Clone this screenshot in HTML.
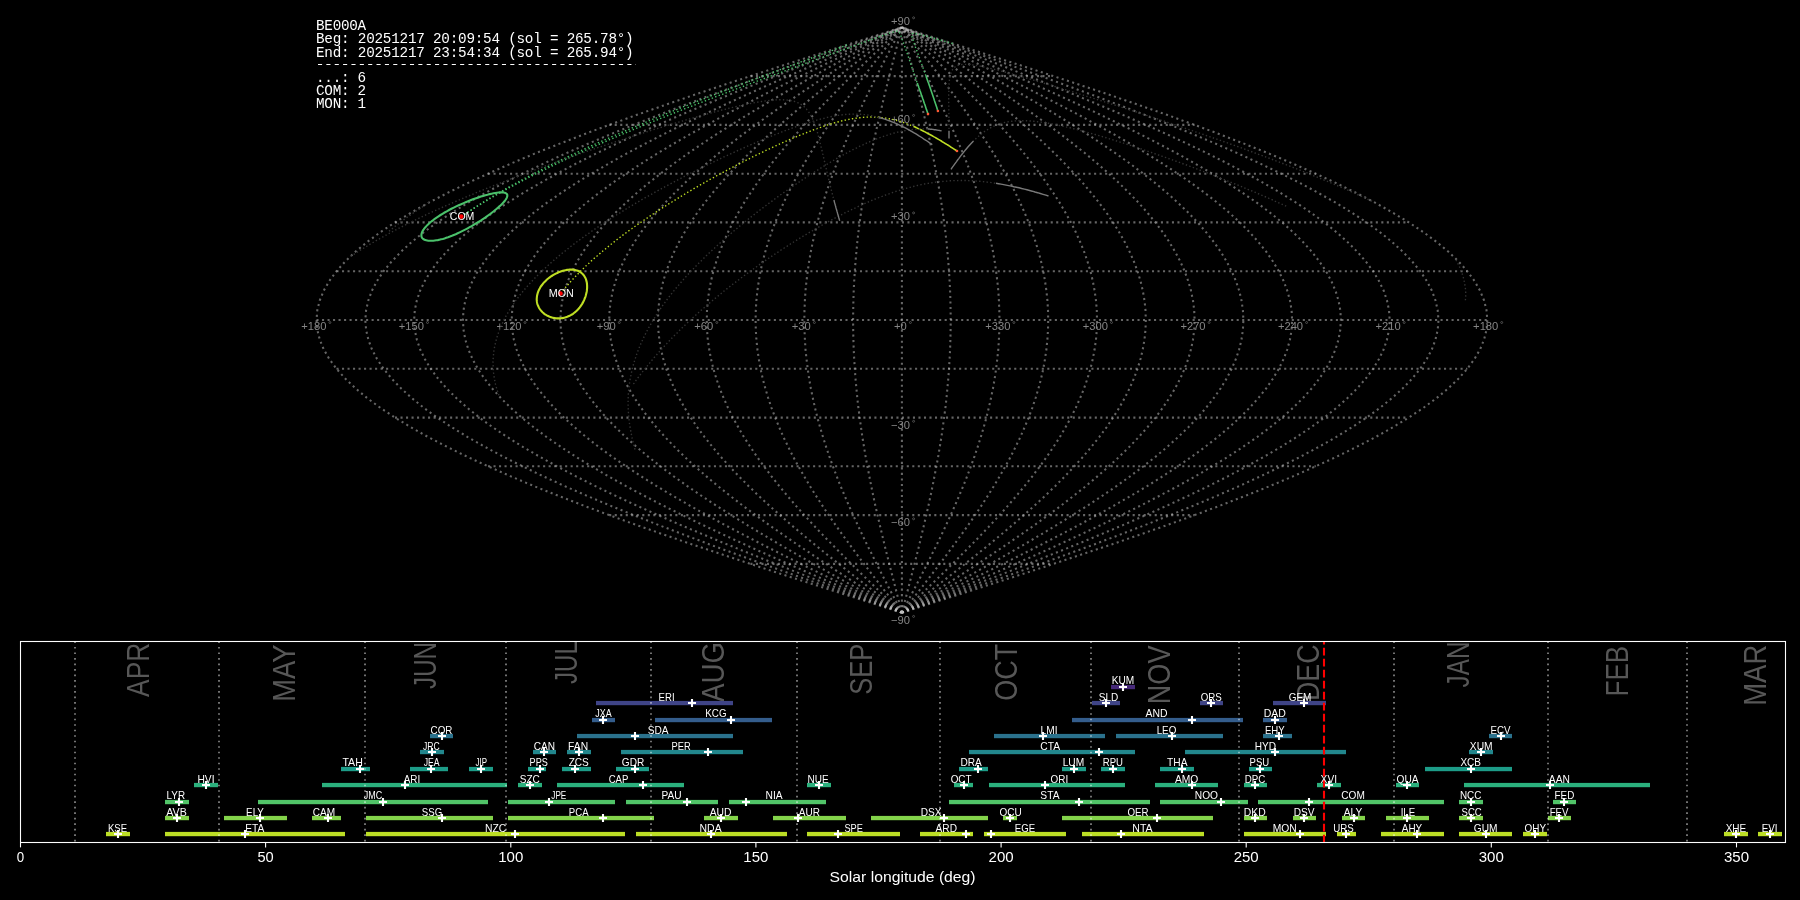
<!DOCTYPE html>
<html><head><meta charset="utf-8"><title>BE000A shower association</title>
<style>
html,body{margin:0;padding:0;background:#000;}
body{width:1800px;height:900px;overflow:hidden;font-family:"Liberation Sans",sans-serif;}
svg{display:block;}
</style></head><body>
<svg width="1800" height="900" viewBox="0 0 1800 900">
<rect width="1800" height="900" fill="#000"/>
<g opacity="0.999">
<g fill="none" stroke="#c4c4c4" stroke-opacity="0.52" stroke-width="2.08" stroke-dasharray="2.08 3.43">
<path d="M750.4 563.9 L1053.4 563.9"/>
<path d="M609.2 515.1 L1194.6 515.1"/>
<path d="M488 466.3 L1315.8 466.3"/>
<path d="M395 417.6 L1408.8 417.6"/>
<path d="M336.5 368.8 L1467.3 368.8"/>
<path d="M316.5 320 L1487.3 320"/>
<path d="M336.5 271.2 L1467.3 271.2"/>
<path d="M395 222.4 L1408.8 222.4"/>
<path d="M488 173.7 L1315.8 173.7"/>
<path d="M609.2 124.9 L1194.6 124.9"/>
<path d="M750.4 76.1 L1053.4 76.1"/>
<path d="M901.9 612.7 L932.5 602.9 L963.1 593.2 L993.5 583.4 L1023.6 573.7 L1053.4 563.9 L1082.8 554.1 L1111.7 544.4 L1140 534.6 L1167.6 524.9 L1194.6 515.1 L1220.7 505.4 L1246 495.6 L1270.3 485.9 L1293.6 476.1 L1315.8 466.3 L1336.9 456.6 L1356.8 446.8 L1375.5 437.1 L1392.8 427.3 L1408.8 417.6 L1423.5 407.8 L1436.7 398 L1448.4 388.3 L1458.6 378.5 L1467.3 368.8 L1474.5 359 L1480.1 349.3 L1484.1 339.5 L1486.5 329.8 L1487.3 320 L1486.5 310.2 L1484.1 300.5 L1480.1 290.7 L1474.5 281 L1467.3 271.2 L1458.6 261.5 L1448.4 251.7 L1436.7 242 L1423.5 232.2 L1408.8 222.4 L1392.8 212.7 L1375.5 202.9 L1356.8 193.2 L1336.9 183.4 L1315.8 173.7 L1293.6 163.9 L1270.3 154.1 L1246 144.4 L1220.7 134.6 L1194.6 124.9 L1167.6 115.1 L1140 105.4 L1111.7 95.6 L1082.8 85.9 L1053.4 76.1 L1023.6 66.3 L993.5 56.6 L963.1 46.8 L932.5 37.1 L901.9 27.3"/>
<path d="M901.9 612.7 L930 602.9 L958 593.2 L985.8 583.4 L1013.5 573.7 L1040.8 563.9 L1067.7 554.1 L1094.2 544.4 L1120.1 534.6 L1145.5 524.9 L1170.2 515.1 L1194.1 505.4 L1217.3 495.6 L1239.6 485.9 L1260.9 476.1 L1281.3 466.3 L1300.7 456.6 L1318.9 446.8 L1336 437.1 L1351.9 427.3 L1366.6 417.6 L1380 407.8 L1392.1 398 L1402.8 388.3 L1412.2 378.5 L1420.2 368.8 L1426.8 359 L1431.9 349.3 L1435.5 339.5 L1437.7 329.8 L1438.5 320 L1437.7 310.2 L1435.5 300.5 L1431.9 290.7 L1426.8 281 L1420.2 271.2 L1412.2 261.5 L1402.8 251.7 L1392.1 242 L1380 232.2 L1366.6 222.4 L1351.9 212.7 L1336 202.9 L1318.9 193.2 L1300.7 183.4 L1281.3 173.7 L1260.9 163.9 L1239.6 154.1 L1217.3 144.4 L1194.1 134.6 L1170.2 124.9 L1145.5 115.1 L1120.1 105.4 L1094.2 95.6 L1067.7 85.9 L1040.8 76.1 L1013.5 66.3 L985.8 56.6 L958 46.8 L930 37.1 L901.9 27.3"/>
<path d="M901.9 612.7 L927.4 602.9 L952.9 593.2 L978.2 583.4 L1003.3 573.7 L1028.2 563.9 L1052.6 554.1 L1076.7 544.4 L1100.3 534.6 L1123.4 524.9 L1145.8 515.1 L1167.6 505.4 L1188.6 495.6 L1208.9 485.9 L1228.3 476.1 L1246.8 466.3 L1264.4 456.6 L1281 446.8 L1296.5 437.1 L1311 427.3 L1324.3 417.6 L1336.5 407.8 L1347.5 398 L1357.3 388.3 L1365.8 378.5 L1373.1 368.8 L1379 359 L1383.7 349.3 L1387 339.5 L1389 329.8 L1389.7 320 L1389 310.2 L1387 300.5 L1383.7 290.7 L1379 281 L1373.1 271.2 L1365.8 261.5 L1357.3 251.7 L1347.5 242 L1336.5 232.2 L1324.3 222.4 L1311 212.7 L1296.5 202.9 L1281 193.2 L1264.4 183.4 L1246.8 173.7 L1228.3 163.9 L1208.9 154.1 L1188.6 144.4 L1167.6 134.6 L1145.8 124.9 L1123.4 115.1 L1100.3 105.4 L1076.7 95.6 L1052.6 85.9 L1028.2 76.1 L1003.3 66.3 L978.2 56.6 L952.9 46.8 L927.4 37.1 L901.9 27.3"/>
<path d="M901.9 612.7 L924.9 602.9 L947.8 593.2 L970.6 583.4 L993.2 573.7 L1015.5 563.9 L1037.6 554.1 L1059.2 544.4 L1080.5 534.6 L1101.2 524.9 L1121.4 515.1 L1141 505.4 L1159.9 495.6 L1178.2 485.9 L1195.7 476.1 L1212.3 466.3 L1228.2 456.6 L1243.1 446.8 L1257.1 437.1 L1270.1 427.3 L1282.1 417.6 L1293.1 407.8 L1303 398 L1311.8 388.3 L1319.4 378.5 L1326 368.8 L1331.3 359 L1335.5 349.3 L1338.5 339.5 L1340.3 329.8 L1340.9 320 L1340.3 310.2 L1338.5 300.5 L1335.5 290.7 L1331.3 281 L1326 271.2 L1319.4 261.5 L1311.8 251.7 L1303 242 L1293.1 232.2 L1282.1 222.4 L1270.1 212.7 L1257.1 202.9 L1243.1 193.2 L1228.2 183.4 L1212.3 173.7 L1195.7 163.9 L1178.2 154.1 L1159.9 144.4 L1141 134.6 L1121.4 124.9 L1101.2 115.1 L1080.5 105.4 L1059.2 95.6 L1037.6 85.9 L1015.5 76.1 L993.2 66.3 L970.6 56.6 L947.8 46.8 L924.9 37.1 L901.9 27.3"/>
<path d="M901.9 612.7 L922.3 602.9 L942.7 593.2 L962.9 583.4 L983 573.7 L1002.9 563.9 L1022.5 554.1 L1041.7 544.4 L1060.6 534.6 L1079.1 524.9 L1097 515.1 L1114.4 505.4 L1131.3 495.6 L1147.5 485.9 L1163 476.1 L1177.8 466.3 L1191.9 456.6 L1205.2 446.8 L1217.6 437.1 L1229.2 427.3 L1239.9 417.6 L1249.6 407.8 L1258.4 398 L1266.2 388.3 L1273 378.5 L1278.8 368.8 L1283.6 359 L1287.3 349.3 L1290 339.5 L1291.6 329.8 L1292.1 320 L1291.6 310.2 L1290 300.5 L1287.3 290.7 L1283.6 281 L1278.8 271.2 L1273 261.5 L1266.2 251.7 L1258.4 242 L1249.6 232.2 L1239.9 222.4 L1229.2 212.7 L1217.6 202.9 L1205.2 193.2 L1191.9 183.4 L1177.8 173.7 L1163 163.9 L1147.5 154.1 L1131.3 144.4 L1114.4 134.6 L1097 124.9 L1079.1 115.1 L1060.6 105.4 L1041.7 95.6 L1022.5 85.9 L1002.9 76.1 L983 66.3 L962.9 56.6 L942.7 46.8 L922.3 37.1 L901.9 27.3"/>
<path d="M901.9 612.7 L919.8 602.9 L937.6 593.2 L955.3 583.4 L972.9 573.7 L990.3 563.9 L1007.4 554.1 L1024.3 544.4 L1040.8 534.6 L1056.9 524.9 L1072.6 515.1 L1087.9 505.4 L1102.6 495.6 L1116.8 485.9 L1130.4 476.1 L1143.3 466.3 L1155.7 456.6 L1167.3 446.8 L1178.1 437.1 L1188.3 427.3 L1197.6 417.6 L1206.1 407.8 L1213.8 398 L1220.7 388.3 L1226.6 378.5 L1231.7 368.8 L1235.9 359 L1239.2 349.3 L1241.5 339.5 L1242.9 329.8 L1243.4 320 L1242.9 310.2 L1241.5 300.5 L1239.2 290.7 L1235.9 281 L1231.7 271.2 L1226.6 261.5 L1220.7 251.7 L1213.8 242 L1206.1 232.2 L1197.6 222.4 L1188.3 212.7 L1178.1 202.9 L1167.3 193.2 L1155.7 183.4 L1143.3 173.7 L1130.4 163.9 L1116.8 154.1 L1102.6 144.4 L1087.9 134.6 L1072.6 124.9 L1056.9 115.1 L1040.8 105.4 L1024.3 95.6 L1007.4 85.9 L990.3 76.1 L972.9 66.3 L955.3 56.6 L937.6 46.8 L919.8 37.1 L901.9 27.3"/>
<path d="M901.9 612.7 L917.2 602.9 L932.5 593.2 L947.7 583.4 L962.8 573.7 L977.7 563.9 L992.3 554.1 L1006.8 544.4 L1020.9 534.6 L1034.8 524.9 L1048.2 515.1 L1061.3 505.4 L1073.9 495.6 L1086.1 485.9 L1097.7 476.1 L1108.9 466.3 L1119.4 456.6 L1129.4 446.8 L1138.7 437.1 L1147.4 427.3 L1155.4 417.6 L1162.7 407.8 L1169.3 398 L1175.1 388.3 L1180.3 378.5 L1184.6 368.8 L1188.2 359 L1191 349.3 L1193 339.5 L1194.2 329.8 L1194.6 320 L1194.2 310.2 L1193 300.5 L1191 290.7 L1188.2 281 L1184.6 271.2 L1180.3 261.5 L1175.1 251.7 L1169.3 242 L1162.7 232.2 L1155.4 222.4 L1147.4 212.7 L1138.7 202.9 L1129.4 193.2 L1119.4 183.4 L1108.9 173.7 L1097.7 163.9 L1086.1 154.1 L1073.9 144.4 L1061.3 134.6 L1048.2 124.9 L1034.8 115.1 L1020.9 105.4 L1006.8 95.6 L992.3 85.9 L977.7 76.1 L962.8 66.3 L947.7 56.6 L932.5 46.8 L917.2 37.1 L901.9 27.3"/>
<path d="M901.9 612.7 L914.7 602.9 L927.4 593.2 L940.1 583.4 L952.6 573.7 L965 563.9 L977.3 554.1 L989.3 544.4 L1001.1 534.6 L1012.6 524.9 L1023.9 515.1 L1034.7 505.4 L1045.3 495.6 L1055.4 485.9 L1065.1 476.1 L1074.4 466.3 L1083.2 456.6 L1091.4 446.8 L1099.2 437.1 L1106.5 427.3 L1113.1 417.6 L1119.2 407.8 L1124.7 398 L1129.6 388.3 L1133.9 378.5 L1137.5 368.8 L1140.5 359 L1142.8 349.3 L1144.5 339.5 L1145.5 329.8 L1145.8 320 L1145.5 310.2 L1144.5 300.5 L1142.8 290.7 L1140.5 281 L1137.5 271.2 L1133.9 261.5 L1129.6 251.7 L1124.7 242 L1119.2 232.2 L1113.1 222.4 L1106.5 212.7 L1099.2 202.9 L1091.4 193.2 L1083.2 183.4 L1074.4 173.7 L1065.1 163.9 L1055.4 154.1 L1045.3 144.4 L1034.7 134.6 L1023.9 124.9 L1012.6 115.1 L1001.1 105.4 L989.3 95.6 L977.3 85.9 L965 76.1 L952.6 66.3 L940.1 56.6 L927.4 46.8 L914.7 37.1 L901.9 27.3"/>
<path d="M901.9 612.7 L912.1 602.9 L922.3 593.2 L932.4 583.4 L942.5 573.7 L952.4 563.9 L962.2 554.1 L971.8 544.4 L981.3 534.6 L990.5 524.9 L999.5 515.1 L1008.2 505.4 L1016.6 495.6 L1024.7 485.9 L1032.5 476.1 L1039.9 466.3 L1046.9 456.6 L1053.5 446.8 L1059.8 437.1 L1065.5 427.3 L1070.9 417.6 L1075.8 407.8 L1080.2 398 L1084.1 388.3 L1087.5 378.5 L1090.4 368.8 L1092.8 359 L1094.6 349.3 L1096 339.5 L1096.8 329.8 L1097 320 L1096.8 310.2 L1096 300.5 L1094.6 290.7 L1092.8 281 L1090.4 271.2 L1087.5 261.5 L1084.1 251.7 L1080.2 242 L1075.8 232.2 L1070.9 222.4 L1065.5 212.7 L1059.8 202.9 L1053.5 193.2 L1046.9 183.4 L1039.9 173.7 L1032.5 163.9 L1024.7 154.1 L1016.6 144.4 L1008.2 134.6 L999.5 124.9 L990.5 115.1 L981.3 105.4 L971.8 95.6 L962.2 85.9 L952.4 76.1 L942.5 66.3 L932.4 56.6 L922.3 46.8 L912.1 37.1 L901.9 27.3"/>
<path d="M901.9 612.7 L909.6 602.9 L917.2 593.2 L924.8 583.4 L932.3 573.7 L939.8 563.9 L947.1 554.1 L954.3 544.4 L961.4 534.6 L968.3 524.9 L975.1 515.1 L981.6 505.4 L987.9 495.6 L994 485.9 L999.8 476.1 L1005.4 466.3 L1010.7 456.6 L1015.6 446.8 L1020.3 437.1 L1024.6 427.3 L1028.6 417.6 L1032.3 407.8 L1035.6 398 L1038.5 388.3 L1041.1 378.5 L1043.3 368.8 L1045 359 L1046.4 349.3 L1047.4 339.5 L1048 329.8 L1048.2 320 L1048 310.2 L1047.4 300.5 L1046.4 290.7 L1045 281 L1043.3 271.2 L1041.1 261.5 L1038.5 251.7 L1035.6 242 L1032.3 232.2 L1028.6 222.4 L1024.6 212.7 L1020.3 202.9 L1015.6 193.2 L1010.7 183.4 L1005.4 173.7 L999.8 163.9 L994 154.1 L987.9 144.4 L981.6 134.6 L975.1 124.9 L968.3 115.1 L961.4 105.4 L954.3 95.6 L947.1 85.9 L939.8 76.1 L932.3 66.3 L924.8 56.6 L917.2 46.8 L909.6 37.1 L901.9 27.3"/>
<path d="M901.9 612.7 L907 602.9 L912.1 593.2 L917.2 583.4 L922.2 573.7 L927.2 563.9 L932 554.1 L936.9 544.4 L941.6 534.6 L946.2 524.9 L950.7 515.1 L955 505.4 L959.2 495.6 L963.3 485.9 L967.2 476.1 L970.9 466.3 L974.4 456.6 L977.7 446.8 L980.8 437.1 L983.7 427.3 L986.4 417.6 L988.8 407.8 L991 398 L993 388.3 L994.7 378.5 L996.1 368.8 L997.3 359 L998.3 349.3 L998.9 339.5 L999.3 329.8 L999.5 320 L999.3 310.2 L998.9 300.5 L998.3 290.7 L997.3 281 L996.1 271.2 L994.7 261.5 L993 251.7 L991 242 L988.8 232.2 L986.4 222.4 L983.7 212.7 L980.8 202.9 L977.7 193.2 L974.4 183.4 L970.9 173.7 L967.2 163.9 L963.3 154.1 L959.2 144.4 L955 134.6 L950.7 124.9 L946.2 115.1 L941.6 105.4 L936.9 95.6 L932 85.9 L927.2 76.1 L922.2 66.3 L917.2 56.6 L912.1 46.8 L907 37.1 L901.9 27.3"/>
<path d="M901.9 612.7 L904.5 602.9 L907 593.2 L909.5 583.4 L912 573.7 L914.5 563.9 L917 554.1 L919.4 544.4 L921.7 534.6 L924 524.9 L926.3 515.1 L928.5 505.4 L930.6 495.6 L932.6 485.9 L934.5 476.1 L936.4 466.3 L938.2 456.6 L939.8 446.8 L941.4 437.1 L942.8 427.3 L944.1 417.6 L945.4 407.8 L946.5 398 L947.4 388.3 L948.3 378.5 L949 368.8 L949.6 359 L950.1 349.3 L950.4 339.5 L950.6 329.8 L950.7 320 L950.6 310.2 L950.4 300.5 L950.1 290.7 L949.6 281 L949 271.2 L948.3 261.5 L947.4 251.7 L946.5 242 L945.4 232.2 L944.1 222.4 L942.8 212.7 L941.4 202.9 L939.8 193.2 L938.2 183.4 L936.4 173.7 L934.5 163.9 L932.6 154.1 L930.6 144.4 L928.5 134.6 L926.3 124.9 L924 115.1 L921.7 105.4 L919.4 95.6 L917 85.9 L914.5 76.1 L912 66.3 L909.5 56.6 L907 46.8 L904.5 37.1 L901.9 27.3"/>
<path d="M901.9 612.7 L901.9 602.9 L901.9 593.2 L901.9 583.4 L901.9 573.7 L901.9 563.9 L901.9 554.1 L901.9 544.4 L901.9 534.6 L901.9 524.9 L901.9 515.1 L901.9 505.4 L901.9 495.6 L901.9 485.9 L901.9 476.1 L901.9 466.3 L901.9 456.6 L901.9 446.8 L901.9 437.1 L901.9 427.3 L901.9 417.6 L901.9 407.8 L901.9 398 L901.9 388.3 L901.9 378.5 L901.9 368.8 L901.9 359 L901.9 349.3 L901.9 339.5 L901.9 329.8 L901.9 320 L901.9 310.2 L901.9 300.5 L901.9 290.7 L901.9 281 L901.9 271.2 L901.9 261.5 L901.9 251.7 L901.9 242 L901.9 232.2 L901.9 222.4 L901.9 212.7 L901.9 202.9 L901.9 193.2 L901.9 183.4 L901.9 173.7 L901.9 163.9 L901.9 154.1 L901.9 144.4 L901.9 134.6 L901.9 124.9 L901.9 115.1 L901.9 105.4 L901.9 95.6 L901.9 85.9 L901.9 76.1 L901.9 66.3 L901.9 56.6 L901.9 46.8 L901.9 37.1 L901.9 27.3"/>
<path d="M901.9 612.7 L899.3 602.9 L896.8 593.2 L894.3 583.4 L891.8 573.7 L889.3 563.9 L886.8 554.1 L884.4 544.4 L882.1 534.6 L879.8 524.9 L877.5 515.1 L875.3 505.4 L873.2 495.6 L871.2 485.9 L869.3 476.1 L867.4 466.3 L865.6 456.6 L864 446.8 L862.4 437.1 L861 427.3 L859.7 417.6 L858.4 407.8 L857.3 398 L856.4 388.3 L855.5 378.5 L854.8 368.8 L854.2 359 L853.7 349.3 L853.4 339.5 L853.2 329.8 L853.1 320 L853.2 310.2 L853.4 300.5 L853.7 290.7 L854.2 281 L854.8 271.2 L855.5 261.5 L856.4 251.7 L857.3 242 L858.4 232.2 L859.7 222.4 L861 212.7 L862.4 202.9 L864 193.2 L865.6 183.4 L867.4 173.7 L869.3 163.9 L871.2 154.1 L873.2 144.4 L875.3 134.6 L877.5 124.9 L879.8 115.1 L882.1 105.4 L884.4 95.6 L886.8 85.9 L889.3 76.1 L891.8 66.3 L894.3 56.6 L896.8 46.8 L899.3 37.1 L901.9 27.3"/>
<path d="M901.9 612.7 L896.8 602.9 L891.7 593.2 L886.6 583.4 L881.6 573.7 L876.6 563.9 L871.8 554.1 L866.9 544.4 L862.2 534.6 L857.6 524.9 L853.1 515.1 L848.8 505.4 L844.6 495.6 L840.5 485.9 L836.6 476.1 L832.9 466.3 L829.4 456.6 L826.1 446.8 L823 437.1 L820.1 427.3 L817.4 417.6 L815 407.8 L812.8 398 L810.8 388.3 L809.1 378.5 L807.7 368.8 L806.5 359 L805.5 349.3 L804.9 339.5 L804.5 329.8 L804.3 320 L804.5 310.2 L804.9 300.5 L805.5 290.7 L806.5 281 L807.7 271.2 L809.1 261.5 L810.8 251.7 L812.8 242 L815 232.2 L817.4 222.4 L820.1 212.7 L823 202.9 L826.1 193.2 L829.4 183.4 L832.9 173.7 L836.6 163.9 L840.5 154.1 L844.6 144.4 L848.8 134.6 L853.1 124.9 L857.6 115.1 L862.2 105.4 L866.9 95.6 L871.8 85.9 L876.6 76.1 L881.6 66.3 L886.6 56.6 L891.7 46.8 L896.8 37.1 L901.9 27.3"/>
<path d="M901.9 612.7 L894.2 602.9 L886.6 593.2 L879 583.4 L871.5 573.7 L864 563.9 L856.7 554.1 L849.5 544.4 L842.4 534.6 L835.5 524.9 L828.7 515.1 L822.2 505.4 L815.9 495.6 L809.8 485.9 L804 476.1 L798.4 466.3 L793.1 456.6 L788.2 446.8 L783.5 437.1 L779.2 427.3 L775.2 417.6 L771.5 407.8 L768.2 398 L765.3 388.3 L762.7 378.5 L760.5 368.8 L758.8 359 L757.4 349.3 L756.4 339.5 L755.8 329.8 L755.6 320 L755.8 310.2 L756.4 300.5 L757.4 290.7 L758.8 281 L760.5 271.2 L762.7 261.5 L765.3 251.7 L768.2 242 L771.5 232.2 L775.2 222.4 L779.2 212.7 L783.5 202.9 L788.2 193.2 L793.1 183.4 L798.4 173.7 L804 163.9 L809.8 154.1 L815.9 144.4 L822.2 134.6 L828.7 124.9 L835.5 115.1 L842.4 105.4 L849.5 95.6 L856.7 85.9 L864 76.1 L871.5 66.3 L879 56.6 L886.6 46.8 L894.2 37.1 L901.9 27.3"/>
<path d="M901.9 612.7 L891.7 602.9 L881.5 593.2 L871.4 583.4 L861.3 573.7 L851.4 563.9 L841.6 554.1 L832 544.4 L822.5 534.6 L813.3 524.9 L804.3 515.1 L795.6 505.4 L787.2 495.6 L779.1 485.9 L771.3 476.1 L763.9 466.3 L756.9 456.6 L750.3 446.8 L744 437.1 L738.3 427.3 L732.9 417.6 L728 407.8 L723.6 398 L719.7 388.3 L716.3 378.5 L713.4 368.8 L711 359 L709.2 349.3 L707.8 339.5 L707 329.8 L706.8 320 L707 310.2 L707.8 300.5 L709.2 290.7 L711 281 L713.4 271.2 L716.3 261.5 L719.7 251.7 L723.6 242 L728 232.2 L732.9 222.4 L738.3 212.7 L744 202.9 L750.3 193.2 L756.9 183.4 L763.9 173.7 L771.3 163.9 L779.1 154.1 L787.2 144.4 L795.6 134.6 L804.3 124.9 L813.3 115.1 L822.5 105.4 L832 95.6 L841.6 85.9 L851.4 76.1 L861.3 66.3 L871.4 56.6 L881.5 46.8 L891.7 37.1 L901.9 27.3"/>
<path d="M901.9 612.7 L889.1 602.9 L876.4 593.2 L863.7 583.4 L851.2 573.7 L838.8 563.9 L826.5 554.1 L814.5 544.4 L802.7 534.6 L791.2 524.9 L779.9 515.1 L769.1 505.4 L758.5 495.6 L748.4 485.9 L738.7 476.1 L729.4 466.3 L720.6 456.6 L712.4 446.8 L704.6 437.1 L697.3 427.3 L690.7 417.6 L684.6 407.8 L679.1 398 L674.2 388.3 L669.9 378.5 L666.3 368.8 L663.3 359 L661 349.3 L659.3 339.5 L658.3 329.8 L658 320 L658.3 310.2 L659.3 300.5 L661 290.7 L663.3 281 L666.3 271.2 L669.9 261.5 L674.2 251.7 L679.1 242 L684.6 232.2 L690.7 222.4 L697.3 212.7 L704.6 202.9 L712.4 193.2 L720.6 183.4 L729.4 173.7 L738.7 163.9 L748.4 154.1 L758.5 144.4 L769.1 134.6 L779.9 124.9 L791.2 115.1 L802.7 105.4 L814.5 95.6 L826.5 85.9 L838.8 76.1 L851.2 66.3 L863.7 56.6 L876.4 46.8 L889.1 37.1 L901.9 27.3"/>
<path d="M901.9 612.7 L886.6 602.9 L871.3 593.2 L856.1 583.4 L841 573.7 L826.1 563.9 L811.5 554.1 L797 544.4 L782.9 534.6 L769 524.9 L755.6 515.1 L742.5 505.4 L729.9 495.6 L717.7 485.9 L706.1 476.1 L694.9 466.3 L684.4 456.6 L674.4 446.8 L665.1 437.1 L656.4 427.3 L648.4 417.6 L641.1 407.8 L634.5 398 L628.7 388.3 L623.5 378.5 L619.2 368.8 L615.6 359 L612.8 349.3 L610.8 339.5 L609.6 329.8 L609.2 320 L609.6 310.2 L610.8 300.5 L612.8 290.7 L615.6 281 L619.2 271.2 L623.5 261.5 L628.7 251.7 L634.5 242 L641.1 232.2 L648.4 222.4 L656.4 212.7 L665.1 202.9 L674.4 193.2 L684.4 183.4 L694.9 173.7 L706.1 163.9 L717.7 154.1 L729.9 144.4 L742.5 134.6 L755.6 124.9 L769 115.1 L782.9 105.4 L797 95.6 L811.5 85.9 L826.1 76.1 L841 66.3 L856.1 56.6 L871.3 46.8 L886.6 37.1 L901.9 27.3"/>
<path d="M901.9 612.7 L884 602.9 L866.2 593.2 L848.5 583.4 L830.9 573.7 L813.5 563.9 L796.4 554.1 L779.5 544.4 L763 534.6 L746.9 524.9 L731.2 515.1 L715.9 505.4 L701.2 495.6 L687 485.9 L673.4 476.1 L660.5 466.3 L648.1 456.6 L636.5 446.8 L625.7 437.1 L615.5 427.3 L606.2 417.6 L597.7 407.8 L590 398 L583.1 388.3 L577.2 378.5 L572.1 368.8 L567.9 359 L564.6 349.3 L562.3 339.5 L560.9 329.8 L560.4 320 L560.9 310.2 L562.3 300.5 L564.6 290.7 L567.9 281 L572.1 271.2 L577.2 261.5 L583.1 251.7 L590 242 L597.7 232.2 L606.2 222.4 L615.5 212.7 L625.7 202.9 L636.5 193.2 L648.1 183.4 L660.5 173.7 L673.4 163.9 L687 154.1 L701.2 144.4 L715.9 134.6 L731.2 124.9 L746.9 115.1 L763 105.4 L779.5 95.6 L796.4 85.9 L813.5 76.1 L830.9 66.3 L848.5 56.6 L866.2 46.8 L884 37.1 L901.9 27.3"/>
<path d="M901.9 612.7 L881.5 602.9 L861.1 593.2 L840.9 583.4 L820.8 573.7 L800.9 563.9 L781.3 554.1 L762.1 544.4 L743.2 534.6 L724.7 524.9 L706.8 515.1 L689.4 505.4 L672.5 495.6 L656.3 485.9 L640.8 476.1 L626 466.3 L611.9 456.6 L598.6 446.8 L586.2 437.1 L574.6 427.3 L563.9 417.6 L554.2 407.8 L545.4 398 L537.6 388.3 L530.8 378.5 L525 368.8 L520.2 359 L516.5 349.3 L513.8 339.5 L512.2 329.8 L511.7 320 L512.2 310.2 L513.8 300.5 L516.5 290.7 L520.2 281 L525 271.2 L530.8 261.5 L537.6 251.7 L545.4 242 L554.2 232.2 L563.9 222.4 L574.6 212.7 L586.2 202.9 L598.6 193.2 L611.9 183.4 L626 173.7 L640.8 163.9 L656.3 154.1 L672.5 144.4 L689.4 134.6 L706.8 124.9 L724.7 115.1 L743.2 105.4 L762.1 95.6 L781.3 85.9 L800.9 76.1 L820.8 66.3 L840.9 56.6 L861.1 46.8 L881.5 37.1 L901.9 27.3"/>
<path d="M901.9 612.7 L878.9 602.9 L856 593.2 L833.2 583.4 L810.6 573.7 L788.3 563.9 L766.2 554.1 L744.6 544.4 L723.3 534.6 L702.6 524.9 L682.4 515.1 L662.8 505.4 L643.9 495.6 L625.6 485.9 L608.1 476.1 L591.5 466.3 L575.6 456.6 L560.7 446.8 L546.7 437.1 L533.7 427.3 L521.7 417.6 L510.7 407.8 L500.8 398 L492 388.3 L484.4 378.5 L477.8 368.8 L472.5 359 L468.3 349.3 L465.3 339.5 L463.5 329.8 L462.9 320 L463.5 310.2 L465.3 300.5 L468.3 290.7 L472.5 281 L477.8 271.2 L484.4 261.5 L492 251.7 L500.8 242 L510.7 232.2 L521.7 222.4 L533.7 212.7 L546.7 202.9 L560.7 193.2 L575.6 183.4 L591.5 173.7 L608.1 163.9 L625.6 154.1 L643.9 144.4 L662.8 134.6 L682.4 124.9 L702.6 115.1 L723.3 105.4 L744.6 95.6 L766.2 85.9 L788.3 76.1 L810.6 66.3 L833.2 56.6 L856 46.8 L878.9 37.1 L901.9 27.3"/>
<path d="M901.9 612.7 L876.4 602.9 L850.9 593.2 L825.6 583.4 L800.5 573.7 L775.6 563.9 L751.2 554.1 L727.1 544.4 L703.5 534.6 L680.4 524.9 L658 515.1 L636.2 505.4 L615.2 495.6 L594.9 485.9 L575.5 476.1 L557 466.3 L539.4 456.6 L522.8 446.8 L507.3 437.1 L492.8 427.3 L479.5 417.6 L467.3 407.8 L456.3 398 L446.5 388.3 L438 378.5 L430.7 368.8 L424.8 359 L420.1 349.3 L416.8 339.5 L414.8 329.8 L414.1 320 L414.8 310.2 L416.8 300.5 L420.1 290.7 L424.8 281 L430.7 271.2 L438 261.5 L446.5 251.7 L456.3 242 L467.3 232.2 L479.5 222.4 L492.8 212.7 L507.3 202.9 L522.8 193.2 L539.4 183.4 L557 173.7 L575.5 163.9 L594.9 154.1 L615.2 144.4 L636.2 134.6 L658 124.9 L680.4 115.1 L703.5 105.4 L727.1 95.6 L751.2 85.9 L775.6 76.1 L800.5 66.3 L825.6 56.6 L850.9 46.8 L876.4 37.1 L901.9 27.3"/>
<path d="M901.9 612.7 L873.8 602.9 L845.8 593.2 L818 583.4 L790.3 573.7 L763 563.9 L736.1 554.1 L709.6 544.4 L683.7 534.6 L658.3 524.9 L633.6 515.1 L609.7 505.4 L586.5 495.6 L564.2 485.9 L542.9 476.1 L522.5 466.3 L503.1 456.6 L484.9 446.8 L467.8 437.1 L451.9 427.3 L437.2 417.6 L423.8 407.8 L411.7 398 L401 388.3 L391.6 378.5 L383.6 368.8 L377 359 L371.9 349.3 L368.3 339.5 L366.1 329.8 L365.3 320 L366.1 310.2 L368.3 300.5 L371.9 290.7 L377 281 L383.6 271.2 L391.6 261.5 L401 251.7 L411.7 242 L423.8 232.2 L437.2 222.4 L451.9 212.7 L467.8 202.9 L484.9 193.2 L503.1 183.4 L522.5 173.7 L542.9 163.9 L564.2 154.1 L586.5 144.4 L609.7 134.6 L633.6 124.9 L658.3 115.1 L683.7 105.4 L709.6 95.6 L736.1 85.9 L763 76.1 L790.3 66.3 L818 56.6 L845.8 46.8 L873.8 37.1 L901.9 27.3"/>
<path d="M901.9 612.7 L871.3 602.9 L840.7 593.2 L810.3 583.4 L780.2 573.7 L750.4 563.9 L721 554.1 L692.1 544.4 L663.8 534.6 L636.2 524.9 L609.2 515.1 L583.1 505.4 L557.8 495.6 L533.5 485.9 L510.2 476.1 L488 466.3 L466.9 456.6 L447 446.8 L428.3 437.1 L411 427.3 L395 417.6 L380.3 407.8 L367.1 398 L355.4 388.3 L345.2 378.5 L336.5 368.8 L329.3 359 L323.7 349.3 L319.7 339.5 L317.3 329.8 L316.5 320 L317.3 310.2 L319.7 300.5 L323.7 290.7 L329.3 281 L336.5 271.2 L345.2 261.5 L355.4 251.7 L367.1 242 L380.3 232.2 L395 222.4 L411 212.7 L428.3 202.9 L447 193.2 L466.9 183.4 L488 173.7 L510.2 163.9 L533.5 154.1 L557.8 144.4 L583.1 134.6 L609.2 124.9 L636.2 115.1 L663.8 105.4 L692.1 95.6 L721 85.9 L750.4 76.1 L780.2 66.3 L810.3 56.6 L840.7 46.8 L871.3 37.1 L901.9 27.3"/>
</g>
<g font-family="Liberation Sans, sans-serif" font-size="11.2" fill="#868686">
<text x="891" y="25.3">+90</text>
<circle cx="913.6" cy="17.8" r="1.0" fill="none" stroke="#6a6a6a" stroke-width="0.7"/>
<text x="891" y="122.9">+60</text>
<circle cx="913.6" cy="115.4" r="1.0" fill="none" stroke="#6a6a6a" stroke-width="0.7"/>
<text x="891" y="220.4">+30</text>
<circle cx="913.6" cy="212.9" r="1.0" fill="none" stroke="#6a6a6a" stroke-width="0.7"/>
<text x="891" y="428.8">−30</text>
<circle cx="913.6" cy="421.3" r="1.0" fill="none" stroke="#6a6a6a" stroke-width="0.7"/>
<text x="891" y="526.3">−60</text>
<circle cx="913.6" cy="518.8" r="1.0" fill="none" stroke="#6a6a6a" stroke-width="0.7"/>
<text x="891" y="623.9">−90</text>
<circle cx="913.6" cy="616.4" r="1.0" fill="none" stroke="#6a6a6a" stroke-width="0.7"/>
<text x="301.2" y="330">+180</text>
<circle cx="329.9" cy="322.5" r="1.0" fill="none" stroke="#6a6a6a" stroke-width="0.7"/>
<text x="398.8" y="330">+150</text>
<circle cx="427.5" cy="322.5" r="1.0" fill="none" stroke="#6a6a6a" stroke-width="0.7"/>
<text x="496.4" y="330">+120</text>
<circle cx="525" cy="322.5" r="1.0" fill="none" stroke="#6a6a6a" stroke-width="0.7"/>
<text x="596.7" y="330">+90</text>
<circle cx="619.3" cy="322.5" r="1.0" fill="none" stroke="#6a6a6a" stroke-width="0.7"/>
<text x="694.3" y="330">+60</text>
<circle cx="716.8" cy="322.5" r="1.0" fill="none" stroke="#6a6a6a" stroke-width="0.7"/>
<text x="791.8" y="330">+30</text>
<circle cx="814.4" cy="322.5" r="1.0" fill="none" stroke="#6a6a6a" stroke-width="0.7"/>
<text x="894" y="330">+0</text>
<circle cx="910.4" cy="322.5" r="1.0" fill="none" stroke="#6a6a6a" stroke-width="0.7"/>
<text x="985.3" y="330">+330</text>
<circle cx="1013.9" cy="322.5" r="1.0" fill="none" stroke="#6a6a6a" stroke-width="0.7"/>
<text x="1082.8" y="330">+300</text>
<circle cx="1111.5" cy="322.5" r="1.0" fill="none" stroke="#6a6a6a" stroke-width="0.7"/>
<text x="1180.4" y="330">+270</text>
<circle cx="1209.1" cy="322.5" r="1.0" fill="none" stroke="#6a6a6a" stroke-width="0.7"/>
<text x="1277.9" y="330">+240</text>
<circle cx="1306.6" cy="322.5" r="1.0" fill="none" stroke="#6a6a6a" stroke-width="0.7"/>
<text x="1375.5" y="330">+210</text>
<circle cx="1404.2" cy="322.5" r="1.0" fill="none" stroke="#6a6a6a" stroke-width="0.7"/>
<text x="1473.1" y="330">+180</text>
<circle cx="1501.7" cy="322.5" r="1.0" fill="none" stroke="#6a6a6a" stroke-width="0.7"/>
</g>
<g fill="none" stroke-width="1.4" stroke-dasharray="1.4 2.3">
<path stroke="#4cc26c" d="M461.3 216.6 L462.5 215.8 L463.7 215 L465 214.2 L466.2 213.3 L467.5 212.5 L468.7 211.7 L470 210.9 L471.3 210.1 L472.6 209.3 L473.9 208.4 L475.2 207.6 L476.5 206.8 L477.8 206 L479.1 205.2 L480.5 204.4 L481.8 203.5 L483.2 202.7 L484.5 201.9 L485.9 201.1 L487.3 200.3 L488.6 199.5 L490 198.7 L491.4 197.8 L492.8 197 L494.3 196.2 L495.7 195.4 L497.1 194.6 L498.6 193.8 L500 192.9 L501.5 192.1 L502.9 191.3 L504.4 190.5 L505.9 189.7 L507.3 188.9 L508.8 188 L510.3 187.2 L511.8 186.4 L513.4 185.6 L514.9 184.8 L516.4 184 L517.9 183.2 L519.5 182.3 L521 181.5 L522.6 180.7 L524.2 179.9 L525.7 179.1 L527.3 178.3 L528.9 177.4 L530.5 176.6 L532.1 175.8 L533.7 175 L535.3 174.2 L536.9 173.4 L538.6 172.5 L540.2 171.7 L541.9 170.9 L543.5 170.1 L545.2 169.3 L546.8 168.5 L548.5 167.7 L550.2 166.8 L551.9 166 L553.6 165.2 L555.3 164.4 L557 163.6 L558.7 162.8 L560.4 161.9 L562.1 161.1 L563.8 160.3 L565.6 159.5 L567.3 158.7 L569.1 157.9 L570.8 157.1 L572.6 156.2 L574.4 155.4 L576.1 154.6 L577.9 153.8 L579.7 153 L581.5 152.2 L583.3 151.3 L585.1 150.5 L586.9 149.7 L588.7 148.9 L590.6 148.1 L592.4 147.3 L594.2 146.4 L596.1 145.6 L597.9 144.8 L599.8 144 L601.6 143.2 L603.5 142.4 L605.4 141.6 L607.2 140.7 L609.1 139.9 L611 139.1 L612.9 138.3 L614.8 137.5 L616.7 136.7 L618.6 135.8 L620.5 135 L622.5 134.2 L624.4 133.4 L626.3 132.6 L628.2 131.8 L630.2 131 L632.1 130.1 L634.1 129.3 L636 128.5 L638 127.7 L640 126.9 L641.9 126.1 L643.9 125.2 L645.9 124.4 L647.9 123.6 L649.9 122.8 L651.9 122 L653.9 121.2 L655.9 120.4 L657.9 119.5 L659.9 118.7 L661.9 117.9 L664 117.1 L666 116.3 L668 115.5 L670.1 114.6 L672.1 113.8 L674.1 113 L676.2 112.2 L678.3 111.4 L680.3 110.6 L682.4 109.8 L684.4 108.9 L686.5 108.1 L688.6 107.3 L690.7 106.5 L692.8 105.7 L694.8 104.9 L696.9 104.1 L699 103.2 L701.1 102.4 L703.2 101.6 L705.3 100.8 L707.5 100 L709.6 99.2 L711.7 98.3 L713.8 97.5 L715.9 96.7 L718.1 95.9 L720.2 95.1 L722.3 94.3 L724.5 93.5 L726.6 92.6 L728.8 91.8 L730.9 91 L733.1 90.2 L735.2 89.4 L737.4 88.6 L739.5 87.8 L741.7 86.9 L743.9 86.1 L746 85.3 L748.2 84.5 L750.4 83.7 L752.6 82.9 L754.7 82.1 L756.9 81.2 L759.1 80.4 L761.3 79.6 L763.5 78.8 L765.7 78 L767.9 77.2 L770.1 76.4 L772.3 75.5 L774.5 74.7 L776.7 73.9 L778.9 73.1 L781.1 72.3 L783.3 71.5 L785.5 70.7 L787.7 69.9 L790 69 L792.2 68.2 L794.4 67.4 L796.6 66.6 L798.9 65.8 L801.1 65 L803.3 64.2 L805.5 63.4 L807.8 62.5 L810 61.7 L812.2 60.9 L814.5 60.1 L816.7 59.3 L818.9 58.5 L821.2 57.7 L823.4 56.9 L825.6 56.1 L827.9 55.3 L830.1 54.4 L832.3 53.6 L834.6 52.8 L836.8 52 L839.1 51.2 L841.3 50.4 L843.5 49.6 L845.8 48.8 L848 48 L850.2 47.2 L852.5 46.4 L854.7 45.6 L856.9 44.8 L859.1 44 L861.3 43.2 L863.5 42.4 L865.7 41.6 L867.9 40.9 L870.1 40.1 L872.3 39.3 L874.5 38.5 L876.6 37.8 L878.7 37 L880.8 36.3 L882.9 35.5 L884.9 34.8 L886.9 34.1 L888.8 33.5 L890.6 32.8 L892.4 32.3 L893.9 31.8 L895.3 31.4 L896.4 31.2 L897.3 31.1 L898 31.2 L898.6 31.5 L899 31.9 L899.4 32.4 L899.7 32.9 L900 33.6 L900.3 34.2 L900.6 34.9 L900.9 35.6 L901.1 36.4 L901.4 37.1 L901.7 37.9 L902 38.6 L902.2 39.4 L902.5 40.2 L902.8 41 L903.1 41.8 L903.4 42.6 L903.6 43.3 L903.9 44.1 L904.2 44.9 L904.5 45.7 L904.8 46.5 L905 47.3 L905.3 48.1 L905.6 48.9 L905.9 49.7 L906.2 50.5 L906.4 51.3 L906.7 52.2 L907 53 L907.3 53.8 L907.6 54.6 L907.8 55.4 L908.1 56.2 L908.4 57 L908.7 57.8 L909 58.6 L909.2 59.4 L909.5 60.2 L909.8 61.1 L910.1 61.9 L910.4 62.7 L910.6 63.5 L910.9 64.3 L911.2 65.1 L911.5 65.9 L911.8 66.7 L912 67.5 L912.3 68.4 L912.6 69.2 L912.9 70 L913.2 70.8 L913.4 71.6 L913.7 72.4 L914 73.2 L914.3 74 L914.5 74.9 L914.8 75.7 L915.1 76.5 L915.4 77.3 L915.6 78.1 L915.9 78.9 L916.2 79.7 L916.5 80.6 L916.7 81.4 L917 82.2 L917.3 83"/>
<path stroke="#4cc26c" d="M461.3 216.6 L462.4 215.8 L463.6 215 L464.7 214.2 L465.9 213.4 L467 212.6 L468.2 211.9 L469.4 211.1 L470.6 210.3 L471.8 209.5 L473 208.7 L474.2 207.9 L475.4 207.1 L476.6 206.3 L477.9 205.5 L479.1 204.7 L480.4 203.9 L481.6 203.1 L482.9 202.4 L484.2 201.6 L485.5 200.8 L486.7 200 L488 199.2 L489.3 198.4 L490.7 197.6 L492 196.8 L493.3 196 L494.6 195.2 L496 194.4 L497.3 193.7 L498.7 192.9 L500 192.1 L501.4 191.3 L502.8 190.5 L504.2 189.7 L505.5 188.9 L506.9 188.1 L508.4 187.3 L509.8 186.5 L511.2 185.7 L512.6 185 L514 184.2 L515.5 183.4 L516.9 182.6 L518.4 181.8 L519.8 181 L521.3 180.2 L522.8 179.4 L524.3 178.6 L525.8 177.8 L527.2 177 L528.7 176.3 L530.3 175.5 L531.8 174.7 L533.3 173.9 L534.8 173.1 L536.4 172.3 L537.9 171.5 L539.4 170.7 L541 169.9 L542.6 169.1 L544.1 168.3 L545.7 167.6 L547.3 166.8 L548.9 166 L550.5 165.2 L552.1 164.4 L553.7 163.6 L555.3 162.8 L556.9 162 L558.5 161.2 L560.2 160.4 L561.8 159.6 L563.4 158.9 L565.1 158.1 L566.7 157.3 L568.4 156.5 L570.1 155.7 L571.7 154.9 L573.4 154.1 L575.1 153.3 L576.8 152.5 L578.5 151.7 L580.2 150.9 L581.9 150.2 L583.6 149.4 L585.3 148.6 L587 147.8 L588.8 147 L590.5 146.2 L592.3 145.4 L594 144.6 L595.8 143.8 L597.5 143 L599.3 142.2 L601 141.5 L602.8 140.7 L604.6 139.9 L606.4 139.1 L608.2 138.3 L610 137.5 L611.8 136.7 L613.6 135.9 L615.4 135.1 L617.2 134.3 L619 133.6 L620.9 132.8 L622.7 132 L624.5 131.2 L626.4 130.4 L628.2 129.6 L630.1 128.8 L631.9 128 L633.8 127.2 L635.6 126.4 L637.5 125.7 L639.4 124.9 L641.3 124.1 L643.2 123.3 L645 122.5 L646.9 121.7 L648.8 120.9 L650.7 120.1 L652.6 119.3 L654.6 118.5 L656.5 117.8 L658.4 117 L660.3 116.2 L662.2 115.4 L664.2 114.6 L666.1 113.8 L668.1 113 L670 112.2 L671.9 111.4 L673.9 110.6 L675.9 109.9 L677.8 109.1 L679.8 108.3 L681.8 107.5 L683.7 106.7 L685.7 105.9 L687.7 105.1 L689.7 104.3 L691.7 103.5 L693.6 102.8 L695.6 102 L697.6 101.2 L699.6 100.4 L701.6 99.6 L703.7 98.8 L705.7 98 L707.7 97.2 L709.7 96.4 L711.7 95.7 L713.8 94.9 L715.8 94.1 L717.8 93.3 L719.8 92.5 L721.9 91.7 L723.9 90.9 L726 90.1 L728 89.3 L730.1 88.6 L732.1 87.8 L734.2 87 L736.2 86.2 L738.3 85.4 L740.4 84.6 L742.4 83.8 L744.5 83 L746.6 82.3 L748.6 81.5 L750.7 80.7 L752.8 79.9 L754.9 79.1 L756.9 78.3 L759 77.5 L761.1 76.8 L763.2 76 L765.3 75.2 L767.4 74.4 L769.5 73.6 L771.6 72.8 L773.7 72 L775.8 71.3 L777.9 70.5 L780 69.7 L782.1 68.9 L784.2 68.1 L786.3 67.3 L788.4 66.6 L790.5 65.8 L792.6 65 L794.7 64.2 L796.8 63.4 L798.9 62.7 L801 61.9 L803.2 61.1 L805.3 60.3 L807.4 59.5 L809.5 58.8 L811.6 58 L813.7 57.2 L815.8 56.4 L817.9 55.7 L820 54.9 L822.1 54.1 L824.2 53.3 L826.3 52.6 L828.4 51.8 L830.5 51 L832.6 50.3 L834.7 49.5 L836.8 48.8 L838.8 48 L840.9 47.2 L843 46.5 L845 45.7 L847 45 L849.1 44.2 M952.7 43.5 L950.1 42.8 L947.5 42.1 L945 41.3 L942.5 40.6 L940 39.9 L937.5 39.2 L935.1 38.6 L932.7 37.9 L930.4 37.3 L928.2 36.6 L926 36.1 L923.9 35.5 L921.9 35 L920.1 34.5 L918.4 34.1 L916.9 33.8 L915.6 33.5 L914.5 33.4 L913.6 33.3 L912.9 33.4 L912.4 33.6 L912.1 33.8 L911.9 34.1 L911.8 34.5 L911.7 35 L911.8 35.5 L911.9 36.1 L912 36.7 L912.1 37.3 L912.3 37.9 L912.5 38.6 L912.7 39.3 L913 39.9 L913.2 40.6 L913.4 41.4 L913.7 42.1 L913.9 42.8 L914.2 43.5 L914.5 44.3 L914.7 45 L915 45.8 L915.3 46.5 L915.5 47.3 L915.8 48 L916.1 48.8 L916.4 49.5 L916.7 50.3 L916.9 51.1 L917.2 51.8 L917.5 52.6 L917.8 53.4 L918.1 54.1 L918.3 54.9 L918.6 55.7 L918.9 56.5 L919.2 57.2 L919.5 58 L919.8 58.8 L920 59.6 L920.3 60.3 L920.6 61.1 L920.9 61.9 L921.2 62.7 L921.5 63.5 L921.8 64.2 L922 65 L922.3 65.8 L922.6 66.6 L922.9 67.4 L923.2 68.2 L923.5 68.9 L923.7 69.7 L924 70.5 L924.3 71.3 L924.6 72.1 L924.9 72.9 L925.2 73.6 L925.4 74.4 L925.7 75.2 L926 76"/>
<path stroke="#c0df25" d="M560.5 293.5 L561.2 292.6 L561.9 291.7 L562.7 290.8 L563.4 289.9 L564.2 289 L564.9 288.1 L565.7 287.2 L566.5 286.3 L567.3 285.4 L568.1 284.5 L568.8 283.6 L569.7 282.7 L570.5 281.8 L571.3 280.9 L572.1 280 L573 279.1 L573.8 278.2 L574.7 277.3 L575.5 276.4 L576.4 275.5 L577.2 274.6 L578.1 273.7 L579 272.8 L579.9 271.9 L580.8 271 L581.7 270.1 L582.6 269.2 L583.6 268.3 L584.5 267.4 L585.4 266.5 L586.4 265.6 L587.3 264.7 L588.3 263.8 L589.3 262.9 L590.2 262 L591.2 261.1 L592.2 260.2 L593.2 259.3 L594.2 258.4 L595.2 257.6 L596.2 256.7 L597.3 255.8 L598.3 254.9 L599.3 254 L600.4 253.1 L601.4 252.2 L602.5 251.3 L603.5 250.4 L604.6 249.6 L605.7 248.7 L606.8 247.8 L607.8 246.9 L608.9 246 L610 245.1 L611.1 244.2 L612.3 243.4 L613.4 242.5 L614.5 241.6 L615.6 240.7 L616.8 239.8 L617.9 239 L619.1 238.1 L620.2 237.2 L621.4 236.3 L622.5 235.4 L623.7 234.6 L624.9 233.7 L626.1 232.8 L627.3 231.9 L628.4 231.1 L629.6 230.2 L630.8 229.3 L632.1 228.5 L633.3 227.6 L634.5 226.7 L635.7 225.9 L636.9 225 L638.2 224.1 L639.4 223.3 L640.7 222.4 L641.9 221.5 L643.2 220.7 L644.4 219.8 L645.7 218.9 L647 218.1 L648.2 217.2 L649.5 216.4 L650.8 215.5 L652.1 214.6 L653.4 213.8 L654.7 212.9 L656 212.1 L657.3 211.2 L658.6 210.4 L659.9 209.5 L661.2 208.7 L662.5 207.8 L663.8 207 L665.2 206.2 L666.5 205.3 L667.8 204.5 L669.2 203.6 L670.5 202.8 L671.9 202 L673.2 201.1 L674.6 200.3 L675.9 199.4 L677.3 198.6 L678.6 197.8 L680 197 L681.4 196.1 L682.7 195.3 L684.1 194.5 L685.5 193.7 L686.9 192.8 L688.2 192 L689.6 191.2 L691 190.4 L692.4 189.6 L693.8 188.7 L695.2 187.9 L696.6 187.1 L698 186.3 L699.4 185.5 L700.8 184.7 L702.2 183.9 L703.6 183.1 L705 182.3 L706.4 181.5 L707.8 180.7 L709.2 179.9 L710.6 179.1 L712.1 178.4 L713.5 177.6 L714.9 176.8 L716.3 176 L717.7 175.2 L719.2 174.4 L720.6 173.7 L722 172.9 L723.4 172.1 L724.8 171.4 L726.3 170.6 L727.7 169.8 L729.1 169.1 L730.5 168.3 L732 167.6 L733.4 166.8 L734.8 166.1 L736.2 165.3 L737.7 164.6 L739.1 163.8 L740.5 163.1 L741.9 162.4 L743.4 161.6 L744.8 160.9 L746.2 160.2 L747.6 159.5 L749.1 158.8 L750.5 158 L751.9 157.3 L753.3 156.6 L754.7 155.9 L756.1 155.2 L757.6 154.5 L759 153.8 L760.4 153.1 L761.8 152.5 L763.2 151.8 L764.6 151.1 L766 150.4 L767.4 149.8 L768.8 149.1 L770.2 148.4 L771.6 147.8 L773 147.1 L774.4 146.5 L775.8 145.8 L777.1 145.2 L778.5 144.6 L779.9 143.9 L781.3 143.3 L782.6 142.7 L784 142.1 L785.4 141.5 L786.7 140.9 L788.1 140.3 L789.4 139.7 L790.8 139.1 L792.1 138.5 L793.5 137.9 L794.8 137.4 L796.2 136.8 L797.5 136.2 L798.8 135.7 L800.1 135.1 L801.5 134.6 L802.8 134.1 L804.1 133.5 L805.4 133 L806.7 132.5 L808 132 L809.3 131.5 L810.6 131 L811.8 130.5 L813.1 130 L814.4 129.5 L815.7 129.1 L816.9 128.6 L818.2 128.2 L819.4 127.7 L820.7 127.3 L821.9 126.9 L823.2 126.4 L824.4 126 L825.6 125.6 L826.8 125.2 L828 124.8 L829.3 124.4 L830.5 124.1 L831.7 123.7 L832.9 123.4 L834 123 L835.2 122.7 L836.4 122.3 L837.6 122 L838.7 121.7 L839.9 121.4 L841 121.1 L842.2 120.8 L843.3 120.6 L844.5 120.3 L845.6 120.1 L846.7 119.8 L847.9 119.6 L849 119.4 L850.1 119.1 L851.2 118.9 L852.3 118.7 L853.4 118.6 L854.5 118.4 L855.6 118.2 L856.7 118.1 L857.7 117.9 L858.8 117.8 L859.9 117.7 L860.9 117.6 L862 117.5 L863.1 117.4 L864.1 117.3 L865.2 117.2 L866.2 117.2 L867.2 117.1 L868.3 117.1 L869.3 117.1 L870.3 117 L871.4 117 L872.4 117 L873.4 117.1 L874.4 117.1 L875.4 117.1 L876.4 117.2 L877.4 117.2 L878.4 117.3 L879.4 117.4 L880.4 117.5 L881.4 117.6 L882.4 117.7 L883.4 117.8 L884.4 117.9 L885.4 118.1 L886.4 118.2 L887.4 118.4 L888.3 118.6 L889.3 118.8 L890.3 119 L891.3 119.2 L892.3 119.4 L893.2 119.6 L894.2 119.8 L895.2 120.1 L896.2 120.3 L897.1 120.6 L898.1 120.9 L899.1 121.2 L900.1 121.5 L901 121.8 L902 122.1 L903 122.4 L903.9 122.7 L904.9 123.1 L905.9 123.4 L906.9 123.8 L907.8 124.1 L908.8 124.5 L909.8 124.9 L910.8 125.3 L911.7 125.7 L912.7 126.1 L913.7 126.5"/>
</g>
<g fill="none" stroke-width="1.6" stroke-linecap="butt">
<path stroke="#4cc26c" d="M917.3 83 L917.8 84.6 L918.4 86.1 L918.9 87.7 L919.5 89.2 L920 90.8 L920.6 92.3 L921.1 93.9 L921.6 95.4 L922.2 97 L922.7 98.5 L923.3 100.1 L923.8 101.7 L924.3 103.2 L924.9 104.8 L925.4 106.3 L925.9 107.9 L926.4 109.4 L927 111 L927.5 112.5 L928 114.1"/>
<path stroke="#4cc26c" d="M926 76 L926.6 77.7 L927.2 79.5 L927.8 81.2 L928.5 83 L929.1 84.7 L929.7 86.5 L930.3 88.2 L930.9 90 L931.5 91.7 L932.1 93.5 L932.7 95.2 L933.3 97 L933.9 98.7 L934.4 100.5 L935 102.2 L935.6 104 L936.2 105.7 L936.8 107.5 L937.3 109.2 L937.9 111"/>
<path stroke="#c0df25" stroke-width="1.6" d="M913.7 126.5 L915.1 127.1 L916.5 127.8 L917.9 128.4 L919.4 129.1 L920.8 129.8 L922.2 130.5 L923.6 131.2 L925 131.9 L926.5 132.7 L927.9 133.4 L929.3 134.2 L930.8 135 L932.2 135.8 L933.6 136.6 L935.1 137.4 L936.5 138.2 L938 139.1 L939.4 139.9 L940.9 140.8 L942.3 141.7 L943.8 142.6 L945.2 143.5 L946.7 144.4 L948.2 145.3 L949.6 146.2 L951.1 147.2 L952.6 148.1 L954.1 149.1 L955.5 150 L957 151"/>
</g>
<g fill="none" stroke="#343434" stroke-width="1.4" stroke-dasharray="1.4 2.3">
<path d="M879.4 117.7 L878.2 117.3 L876.9 117 L875.7 116.7 L874.5 116.4 L873.2 116.1 L872 115.8 L870.7 115.6 L869.5 115.4 L868.2 115.1 L866.9 115 L865.7 114.8 L864.4 114.6 L863.1 114.5 L861.8 114.4 L860.5 114.3 L859.2 114.2 L857.8 114.1 L856.5 114.1 L855.1 114.1 L853.8 114.1 L852.4 114.1 L851 114.2 L849.7 114.2 L848.3 114.3 L846.8 114.4 L845.4 114.5 L844 114.7 L842.5 114.8 L841.1 115 L839.6 115.2 L838.1 115.4 L836.7 115.6 L835.1 115.9 L833.6 116.2 L832.1 116.5 L830.6 116.8 L829 117.1 L827.4 117.4 L825.8 117.8 L824.3 118.2 L822.6 118.6 L821 119 L819.4 119.4 L817.7 119.8 L816.1 120.3 L814.4 120.8 L812.7 121.3 L811 121.8 L809.3 122.3 L807.6 122.8 L805.8 123.4 L804.1 124 L802.3 124.5 L800.6 125.1 L798.8 125.7 L797 126.4 L795.2 127 L793.4 127.7 L791.5 128.3 L789.7 129 L787.8 129.7 L786 130.4 L784.1 131.1 L782.2 131.8 L780.3 132.5 L778.4 133.3 L776.5 134 L774.6 134.8 L772.7 135.6 L770.7 136.3 L768.8 137.1 L766.8 137.9 L764.9 138.8 L762.9 139.6 L760.9 140.4 L759 141.2 L757 142.1 L755 143 L753 143.8 L751 144.7 L749 145.6 L746.9 146.5 L744.9 147.4 L742.9 148.3 L740.9 149.2 L738.8 150.1 L736.8 151 L734.8 151.9 L732.7 152.9 L730.7 153.8 L728.6 154.8 L726.6 155.7 L724.5 156.7 L722.5 157.7 L720.4 158.6 L718.3 159.6 L716.3 160.6 L714.2 161.6 L712.2 162.6 L710.1 163.6 L708 164.6 L706 165.6 L703.9 166.6 L701.9 167.6 L699.8 168.7 L697.7 169.7 L695.7 170.7 L693.6 171.8 L691.6 172.8 L689.5 173.8 L687.5 174.9 L685.4 175.9 L683.4 177 L681.3 178.1 L679.3 179.1 L677.3 180.2 L675.2 181.3 L673.2 182.3 L671.2 183.4 L669.2 184.5 L667.1 185.6 L665.1 186.7 L663.1 187.8 L661.1 188.9 L659.1 190 L657.1 191.1 L655.1 192.2 L653.2 193.3 L651.2 194.4 L649.2 195.5 L647.3 196.6 L645.3 197.7 L643.4 198.8 L641.4 199.9 L639.5 201.1 L637.6 202.2 L635.6 203.3 L633.7 204.4 L631.8 205.6 L629.9 206.7 L628 207.8 L626.1 209 L624.3 210.1 L622.4 211.3 L620.6 212.4 L618.7 213.6 L616.9 214.7 L615 215.8 L613.2 217 L611.4 218.2 L609.6 219.3 L607.8 220.5 L606 221.6 L604.3 222.8 L602.5 223.9 L600.7 225.1 L599 226.3 L597.3 227.4 L595.6 228.6 L593.8 229.8 L592.2 230.9 L590.5 232.1 L588.8 233.3 L587.1 234.4 L585.5 235.6 L583.8 236.8 L582.2 238 L580.6 239.1 L579 240.3 L577.4 241.5 L575.8 242.7 L574.2 243.9 L572.7 245 L571.1 246.2 L569.6 247.4 L568.1 248.6 L566.6 249.8 L565.1 251 L563.6 252.2 L562.1 253.3 L560.7 254.5 L559.2 255.7 L557.8 256.9 L556.4 258.1 L555 259.3 L553.6 260.5 L552.2 261.7 L550.9 262.9 L549.5 264.1 L548.2 265.3 L546.9 266.5 L545.6 267.7 L544.3 268.9 L543 270.1 L541.8 271.3 L540.5 272.5 L539.3 273.7 L538.1 274.9 L536.9 276.1 L535.7 277.3 L534.5 278.5 L533.4 279.7 L532.2 280.9 L531.1 282.1 L530 283.3 L528.9 284.5 L527.8 285.7 L526.8 286.9 L525.7 288.1 L524.7 289.3 L523.7 290.5 L522.7 291.7 L521.7 292.9 L520.7 294.1 L519.8 295.3 L518.9 296.6 L517.9 297.8 L517 299 L516.1 300.2 L515.3 301.4 L514.4 302.6 L513.6 303.8 L512.8 305 L512 306.2 L511.2 307.4 L510.4 308.6 L509.6 309.9 L508.9 311.1 L508.2 312.3 L507.5 313.5 L506.8 314.7 L506.1 315.9 L505.4 317.1 L504.8 318.3 L504.2 319.5 L503.6 320.8 L503 322 L502.4 323.2 L501.9 324.4 L501.3 325.6 L500.8 326.8 L500.3 328 L499.8 329.2 L499.3 330.4 L498.9 331.6 L498.4 332.9 L498 334.1 L497.6 335.3 L497.2 336.5 L496.9 337.7 L496.5 338.9 L496.2 340.1 L495.9 341.3 L495.6 342.5 L495.3 343.7 L495 344.9 L494.8 346.2 L494.5 347.4 L494.3 348.6 L494.1 349.8 L493.9 351 L493.8 352.2 L493.6 353.4 L493.5 354.6 L493.4 355.8 L493.3 357 L493.2 358.2 L493.1 359.4 L493.1 360.6 L493 361.8 L493 363 L493 364.2 L493.1 365.4 L493.1 366.6 L493.1 367.8 L493.2 369 L493.3 370.2 L493.4 371.4 L493.5 372.6 L493.7 373.8 L493.8 375 L494 376.2 L494.2 377.4 L494.4 378.6 L494.6 379.8 L494.8 381 L495.1 382.2 L495.3 383.4 L495.6 384.6 L495.9 385.8 L496.2 387 L496.6 388.1 L496.9 389.3 L497.3 390.5 L497.7 391.7 L498 392.9 L498.5 394.1 L498.9 395.3 L499.3 396.4 L499.8 397.6"/>
<path d="M927.7 128.9 L926.2 128.9 L924.7 128.9 L923.1 128.9 L921.6 128.9 L920.1 129 L918.6 129 L917.1 129.1 L915.6 129.2 L914.1 129.4 L912.6 129.5 L911.1 129.7 L909.6 129.9 L908.2 130.1 L906.7 130.3 L905.2 130.6 L903.7 130.8 L902.2 131.1 L900.7 131.4 L899.2 131.8 L897.7 132.1 L896.2 132.5 L894.8 132.9 L893.3 133.3 L891.8 133.7 L890.3 134.1 L888.8 134.6 L887.3 135.1 L885.8 135.5 L884.3 136 L882.8 136.6 L881.3 137.1 L879.8 137.7 L878.3 138.2 L876.8 138.8 L875.2 139.4 L873.7 140 L872.2 140.7 L870.7 141.3 L869.2 142 L867.6 142.7 L866.1 143.3 L864.6 144 L863 144.8 L861.5 145.5 L859.9 146.2 L858.4 147 L856.8 147.8 L855.3 148.5 L853.7 149.3 L852.1 150.1 L850.6 150.9 L849 151.8 L847.4 152.6 L845.9 153.4 L844.3 154.3 L842.7 155.2 L841.1 156 L839.6 156.9 L838 157.8 L836.4 158.7 L834.8 159.7 L833.2 160.6 L831.6 161.5 L830 162.5 L828.4 163.4 L826.8 164.4 L825.2 165.3 L823.6 166.3 L822 167.3 L820.4 168.3 L818.8 169.3 L817.2 170.3 L815.6 171.3 L813.9 172.3 L812.3 173.3 L810.7 174.4 L809.1 175.4 L807.5 176.5 L805.9 177.5 L804.3 178.6 L802.7 179.6 L801 180.7 L799.4 181.8 L797.8 182.9 L796.2 184 L794.6 185.1 L793 186.1 L791.4 187.3 L789.8 188.4 L788.2 189.5 L786.6 190.6 L785 191.7 L783.4 192.8 L781.8 194 L780.2 195.1 L778.6 196.2 L777 197.4 L775.4 198.5 L773.8 199.7 L772.3 200.9 L770.7 202 L769.1 203.2 L767.5 204.3 L766 205.5 L764.4 206.7 L762.8 207.9 L761.3 209 L759.7 210.2 L758.2 211.4 L756.6 212.6 L755.1 213.8 L753.6 215 L752 216.2 L750.5 217.4 L749 218.6 L747.5 219.8 L746 221 L744.4 222.2 L742.9 223.5 L741.4 224.7 L740 225.9 L738.5 227.1 L737 228.4 L735.5 229.6 L734.1 230.8 L732.6 232 L731.2 233.3 L729.7 234.5 L728.3 235.8 L726.8 237 L725.4 238.2 L724 239.5 L722.6 240.7 L721.2 242 L719.8 243.2 L718.4 244.5 L717 245.7 L715.6 247 L714.3 248.3 L712.9 249.5 L711.6 250.8 L710.2 252 L708.9 253.3 L707.6 254.6 L706.2 255.8 L704.9 257.1 L703.6 258.4 L702.3 259.6 L701.1 260.9 L699.8 262.2 L698.5 263.5 L697.3 264.7 L696 266 L694.8 267.3 L693.6 268.6 L692.3 269.8 L691.1 271.1 L689.9 272.4 L688.7 273.7 L687.6 275 L686.4 276.2 L685.2 277.5 L684.1 278.8 L682.9 280.1 L681.8 281.4 L680.7 282.7 L679.6 284 L678.5 285.3 L677.4 286.5 L676.3 287.8 L675.3 289.1 L674.2 290.4 L673.2 291.7 L672.1 293 L671.1 294.3 L670.1 295.6 L669.1 296.9 L668.1 298.2 L667.1 299.5 L666.2 300.8 L665.2 302.1 L664.3 303.4 L663.3 304.7 L662.4 305.9 L661.5 307.2 L660.6 308.5 L659.7 309.8 L658.8 311.1 L658 312.4 L657.1 313.7 L656.3 315 L655.5 316.3 L654.7 317.6 L653.8 318.9 L653.1 320.2 L652.3 321.5 L651.5 322.8 L650.8 324.1 L650 325.4 L649.3 326.7 L648.6 328 L647.9 329.3 L647.2 330.6 L646.5 331.9 L645.8 333.2 L645.2 334.5 L644.5 335.8 L643.9 337.1 L643.3 338.4 L642.7 339.7 L642.1 341 L641.5 342.3 L640.9 343.6 L640.4 344.8 L639.8 346.1 L639.3 347.4 L638.8 348.7 L638.3 350 L637.8 351.3 L637.3 352.6 L636.8 353.9 L636.4 355.2 L635.9 356.5 L635.5 357.8 L635.1 359 L634.7 360.3 L634.3 361.6 L633.9 362.9 L633.5 364.2 L633.2 365.5 L632.8 366.8 L632.5 368 L632.2 369.3 L631.9 370.6 L631.6 371.9 L631.3 373.1 L631 374.4 L630.8 375.7 L630.5 377 L630.3 378.2 L630.1 379.5 L629.9 380.8 L629.7 382.1 L629.5 383.3 L629.3 384.6 L629.1 385.9 L629 387.1 L628.8 388.4 L628.7 389.6 L628.6 390.9 L628.5 392.2 L628.4 393.4 L628.3 394.7 L628.3 395.9 L628.2 397.2 L628.2 398.4 L628.1 399.7 L628.1 400.9 L628.1 402.2 L628.1 403.4 L628.1 404.7 L628.1 405.9 L628.1 407.1 L628.2 408.4 L628.2 409.6 L628.3 410.8 L628.4 412.1 L628.5 413.3 L628.5 414.5 L628.6 415.7 L628.8 416.9 L628.9 418.2 L629 419.4 L629.1 420.6 L629.3 421.8 L629.4 423 L629.6 424.2 L629.8 425.4 L630 426.6 L630.2 427.8 L630.4 429 L630.6 430.2 L630.8 431.3 L631 432.5 L631.2 433.7 L631.5 434.9 L631.7 436 L632 437.2 L632.2 438.4 L632.5 439.5 L632.8 440.7 L633 441.8 L633.3 443 L633.6 444.1 L633.9 445.3 L634.2 446.4 L634.5 447.5 L634.8 448.7 L635.1 449.8 L635.4 450.9"/>
<path d="M389 231.3 L390.2 230.3 L391.4 229.3 L392.6 228.4 L393.8 227.4 L395 226.4 L396.2 225.4 L397.5 224.5 L398.7 223.5 L400 222.5 L401.3 221.6 L402.6 220.6 L403.9 219.6 L405.2 218.6 L406.6 217.7 L407.9 216.7 L409.3 215.7 L410.7 214.8 L412.1 213.8 L413.5 212.8 L414.9 211.9 L416.3 210.9 L417.8 209.9 L419.2 209 L420.7 208 L422.2 207 L423.7 206 L425.2 205.1 L426.7 204.1 L428.2 203.1 L429.8 202.2 M1372.1 201.2 L1370 200.2 L1368 199.3 L1365.9 198.3 L1363.8 197.3 L1361.7 196.4 L1359.6 195.4 L1357.4 194.5 L1355.3 193.5 L1353.1 192.5 L1351 191.6 L1348.8 190.6 L1346.6 189.6 L1344.4 188.7 L1342.2 187.7 L1340 186.7 L1337.8 185.8 L1335.5 184.8 L1333.3 183.9 L1331 182.9 L1328.7 181.9 L1326.4 181 L1324.1 180 L1321.8 179.1 L1319.5 178.1 L1317.2 177.1 L1314.8 176.2 L1312.5 175.2 L1310.1 174.3 L1307.8 173.3 L1305.4 172.3 L1303 171.4 L1300.6 170.4 L1298.2 169.5 L1295.8 168.5 L1293.4 167.6 L1290.9 166.6 L1288.5 165.7 L1286 164.7 L1283.6 163.8 L1281.1 162.8 L1278.6 161.8 L1276.1 160.9 L1273.6 159.9 L1271.1 159 L1268.6 158 L1266.1 157.1 L1263.6 156.1 L1261 155.2 L1258.5 154.3 L1255.9 153.3 L1253.4 152.4 L1250.8 151.4 L1248.2 150.5 L1245.7 149.5 L1243.1 148.6 L1240.5 147.6 L1237.9 146.7 L1235.3 145.8 L1232.6 144.8 L1230 143.9 L1227.4 142.9 L1224.8 142 L1222.1 141.1 L1219.5 140.1 L1216.8 139.2 L1214.2 138.3 L1211.5 137.3 L1208.8 136.4 L1206.2 135.5 L1203.5 134.5 L1200.8 133.6 L1198.1 132.7 L1195.4 131.8 L1192.7 130.8 L1190 129.9 L1187.3 129 L1184.6 128.1 L1181.9 127.1 L1179.2 126.2 L1176.5 125.3 L1173.7 124.4 L1171 123.5 L1168.3 122.6 L1165.6 121.6 L1162.8 120.7 L1160.1 119.8 L1157.4 118.9 L1154.6 118 L1151.9 117.1 L1149.1 116.2 L1146.4 115.3 L1143.7 114.4 L1140.9 113.5 L1138.2 112.6 L1135.4 111.7 L1132.7 110.8 L1130 110 L1127.2 109.1 L1124.5 108.2 L1121.7 107.3 L1119 106.4 L1116.3 105.6 L1113.5 104.7 L1110.8 103.8 L1108.1 103 L1105.4 102.1 L1102.7 101.2 L1099.9 100.4 L1097.2 99.5 L1094.5 98.7 L1091.8 97.8 L1089.1 97 L1086.5 96.2 L1083.8 95.3 L1081.1 94.5 L1078.5 93.7 L1075.8 92.9 L1073.2 92 L1070.5 91.2 L1067.9 90.4 L1065.3 89.6 L1062.7 88.8 L1060.1 88.1 L1057.5 87.3 L1054.9 86.5 L1052.4 85.7 L1049.8 85 L1047.3 84.2 L1044.8 83.5 L1042.3 82.7 L1039.8 82 L1037.4 81.3 L1034.9 80.5 L1032.5 79.8 L1030.1 79.1 L1027.8 78.5 L1025.4 77.8 L1023.1 77.1 L1020.8 76.5 L1018.5 75.8 L1016.2 75.2 L1014 74.6 L1011.8 73.9 L1009.6 73.4 L1007.5 72.8 L1005.4 72.2 L1003.3 71.7 L1001.3 71.1 L999.3 70.6 L997.3 70.1 L995.4 69.6 L993.5 69.1 L991.6 68.7 L989.8 68.3 L988 67.9 L986.3 67.5 L984.6 67.1 L983 66.7 L981.4 66.4 L979.8 66.1 L978.3 65.8 L976.9 65.6 L975.4 65.3 L974.1 65.1 L972.7 64.9 L971.5 64.8 L970.2 64.7 L969 64.5 L967.9 64.5 L966.8 64.4 L965.8 64.4 L964.8 64.4 L963.8 64.4 L962.9 64.5 L962 64.5 L961.2 64.6 L960.4 64.8 L959.7 64.9 L959 65.1 L958.3 65.3 L957.7 65.5 L957 65.8 L956.5 66.1 L955.9 66.4 L955.4 66.7 L955 67 L954.5 67.4 L954.1 67.8 L953.7 68.2 L953.3 68.6 L953 69.1 L952.6 69.5 L952.3 70 L952.1 70.5 L951.8 71 L951.5 71.6 L951.3 72.1 L951.1 72.7 L950.9 73.3 L950.7 73.9 L950.5 74.5 L950.4 75.1 L950.2 75.7 L950.1 76.4 L949.9 77 L949.8 77.7 L949.7 78.4 L949.6 79 L949.5 79.7 L949.4 80.4 L949.3 81.2 L949.3 81.9 L949.2 82.6 L949.1 83.4 L949.1 84.1 L949 84.9 L949 85.6 L949 86.4 L948.9 87.2 L948.9 87.9 L948.9 88.7 L948.8 89.5 L948.8 90.3 L948.8 91.1 L948.8 91.9 L948.8 92.7 L948.8 93.6 L948.7 94.4 L948.7 95.2 L948.7 96 L948.7 96.9 L948.7 97.7 L948.7 98.6 L948.7 99.4 L948.7 100.3 L948.7 101.1 L948.7 102 L948.7 102.8 L948.8 103.7 L948.8 104.6 L948.8 105.4 L948.8 106.3 L948.8 107.2 L948.8 108.1 L948.8 109 L948.8 109.8 L948.8 110.7 L948.8 111.6 L948.8 112.5 L948.9 113.4 L948.9 114.3 L948.9 115.2 L948.9 116.1 L948.9 117 L948.9 117.9 L948.9 118.8 L948.9 119.7 L948.9 120.6 L948.9 121.5 L948.9 122.4 L949 123.3 L949 124.3 L949 125.2 L949 126.1 L949 127 L949 127.9 L949 128.9 L949 129.8 L949 130.7"/>
<path d="M1286.2 206.2 L1284.9 205.5 L1283.5 204.9 L1282.2 204.3 L1280.8 203.7 L1279.5 203.1 L1278.1 202.5 L1276.8 201.9 L1275.4 201.3 L1274.1 200.7 L1272.7 200 L1271.4 199.4 L1270 198.8 L1268.6 198.2 L1267.3 197.6 L1265.9 197 L1264.5 196.4 L1263.1 195.8 L1261.7 195.2 L1260.4 194.6 L1259 194 L1257.6 193.4 L1256.2 192.8 L1254.8 192.2 L1253.4 191.6 L1252 191 L1250.6 190.5 L1249.2 189.9 L1247.8 189.3 L1246.4 188.7 L1245 188.1 L1243.6 187.5 L1242.2 186.9 L1240.8 186.3 L1239.4 185.8 L1238 185.2 L1236.5 184.6 L1235.1 184 L1233.7 183.4 L1232.3 182.9 L1230.9 182.3 L1229.4 181.7 L1228 181.1 L1226.6 180.6 L1225.2 180 L1223.7 179.4 L1222.3 178.8 L1220.9 178.3 L1219.5 177.7 L1218 177.1 L1216.6 176.6 L1215.2 176 L1213.7 175.4 L1212.3 174.9 L1210.9 174.3 L1209.4 173.8 L1208 173.2 L1206.6 172.7 L1205.1 172.1 L1203.7 171.6 L1202.3 171 L1200.8 170.5 L1199.4 169.9 L1198 169.4 L1196.5 168.8 L1195.1 168.3 L1193.7 167.7 L1192.2 167.2 L1190.8 166.7 L1189.4 166.1 L1187.9 165.6 L1186.5 165 L1185.1 164.5 L1183.6 164 L1182.2 163.5 L1180.8 162.9 L1179.3 162.4 L1177.9 161.9 L1176.5 161.4 L1175.1 160.9 L1173.6 160.3 L1172.2 159.8 L1170.8 159.3 L1169.4 158.8 L1167.9 158.3 L1166.5 157.8 L1165.1 157.3 L1163.7 156.8 L1162.3 156.3 L1160.9 155.8 L1159.5 155.3 L1158 154.8 L1156.6 154.3 L1155.2 153.8 L1153.8 153.3 L1152.4 152.8 L1151 152.3 L1149.6 151.9 L1148.2 151.4 L1146.8 150.9 L1145.5 150.4 L1144.1 150 L1142.7 149.5 L1141.3 149 L1139.9 148.6 L1138.6 148.1 L1137.2 147.7 L1135.8 147.2 L1134.4 146.7 L1133.1 146.3 L1131.7 145.8 L1130.4 145.4 L1129 145 L1127.7 144.5 L1126.3 144.1 L1125 143.6 L1123.6 143.2 L1122.3 142.8 L1121 142.4 L1119.6 141.9 L1118.3 141.5 L1117 141.1 L1115.7 140.7 L1114.4 140.3 L1113 139.9 L1111.7 139.5 L1110.4 139.1 L1109.1 138.7 L1107.9 138.3 L1106.6 137.9 L1105.3 137.5 L1104 137.1 L1102.7 136.7 L1101.5 136.4 L1100.2 136 L1098.9 135.6 L1097.7 135.3 L1096.4 134.9 L1095.2 134.5 L1094 134.2 L1092.7 133.8 L1091.5 133.5 L1090.3 133.1 L1089.1 132.8 L1087.9 132.5 L1086.7 132.1 L1085.5 131.8 L1084.3 131.5 L1083.1 131.2 L1081.9 130.9 L1080.7 130.5 L1079.5 130.2 L1078.4 129.9 L1077.2 129.6 L1076.1 129.3 L1074.9 129.1 L1073.8 128.8 L1072.7 128.5 L1071.5 128.2 L1070.4 127.9 L1069.3 127.7 L1068.2 127.4 L1067.1 127.1 L1066 126.9 L1064.9 126.6 L1063.8 126.4 L1062.8 126.2 L1061.7 125.9 L1060.6 125.7 L1059.6 125.5 L1058.5 125.2 L1057.5 125 L1056.5 124.8 L1055.4 124.6 L1054.4 124.4 L1053.4 124.2 L1052.4 124 L1051.4 123.8 L1050.4 123.7 L1049.4 123.5 L1048.4 123.3 L1047.5 123.1 L1046.5 123 L1045.6 122.8 L1044.6 122.7 L1043.7 122.5 L1042.7 122.4 L1041.8 122.3 L1040.9 122.1 L1040 122 L1039.1 121.9 L1038.2 121.8 L1037.3 121.7 L1036.4 121.6 L1035.5 121.5 L1034.6 121.4 L1033.8 121.3 L1032.9 121.2 L1032.1 121.1 L1031.2 121.1 L1030.4 121 L1029.6 121 L1028.7 120.9 L1027.9 120.9 L1027.1 120.8 L1026.3 120.8 L1025.5 120.8 L1024.7 120.7 L1024 120.7 L1023.2 120.7 L1022.4 120.7 L1021.7 120.7 L1020.9 120.7 L1020.2 120.7 L1019.4 120.7 L1018.7 120.8 L1018 120.8 L1017.2 120.8 L1016.5 120.9 L1015.8 120.9 L1015.1 120.9 L1014.4 121 L1013.7 121.1 L1013.1 121.1 L1012.4 121.2 L1011.7 121.3 L1011 121.4 L1010.4 121.5 L1009.7 121.5 L1009.1 121.6 L1008.4 121.7 L1007.8 121.9 L1007.2 122 L1006.5 122.1 L1005.9 122.2 L1005.3 122.4 L1004.7 122.5 L1004.1 122.6 L1003.5 122.8 L1002.9 122.9 L1002.3 123.1 L1001.7 123.3 L1001.1 123.4 L1000.6 123.6 L1000 123.8 L999.4 124 L998.9 124.2 L998.3 124.4 L997.8 124.6 L997.2 124.8 L996.7 125 L996.1 125.2 L995.6 125.4 L995.1 125.6 L994.5 125.9 L994 126.1 L993.5 126.3 L993 126.6 L992.5 126.8 L992 127.1 L991.4 127.3 L990.9 127.6 L990.5 127.9 L990 128.1 L989.5 128.4 L989 128.7 L988.5 129 L988 129.3 L987.5 129.6 L987.1 129.9 L986.6 130.2 L986.1 130.5 L985.6 130.8 L985.2 131.1 L984.7 131.4 L984.3 131.7 L983.8 132.1 L983.4 132.4 L982.9 132.7 L982.5 133.1 L982 133.4 L981.6 133.7 L981.1 134.1 L980.7 134.4 L980.2 134.8 L979.8 135.2 L979.4 135.5 L978.9 135.9 L978.5 136.3 L978.1 136.6 L977.7 137 L977.2 137.4 L976.8 137.8 L976.4 138.2 L976 138.6 L975.6 139 L975.1 139.4 L974.7 139.8 L974.3 140.2 L973.9 140.6 L973.5 141"/>
<path d="M633.4 384 L634.1 383.1 L634.7 382.2 L635.4 381.3 L636 380.4 L636.7 379.5 L637.4 378.6 L638 377.7 L638.7 376.8 L639.4 375.9 L640.1 375 L640.8 374.1 L641.5 373.2 L642.2 372.3 L642.9 371.4 L643.6 370.5 L644.3 369.6 L645.1 368.6 L645.8 367.7 L646.5 366.8 L647.3 365.9 L648 365 L648.8 364 L649.6 363.1 L650.3 362.2 L651.1 361.2 L651.9 360.3 L652.7 359.4 L653.4 358.5 L654.2 357.5 L655 356.6 L655.9 355.6 L656.7 354.7 L657.5 353.8 L658.3 352.8 L659.1 351.9 L660 350.9 L660.8 350 L661.7 349 L662.5 348.1 L663.4 347.2 L664.3 346.2 L665.1 345.3 L666 344.3 L666.9 343.4 L667.8 342.4 L668.7 341.5 L669.6 340.5 L670.5 339.6 L671.4 338.6 L672.4 337.6 L673.3 336.7 L674.2 335.7 L675.2 334.8 L676.1 333.8 L677.1 332.9 L678 331.9 L679 331 L679.9 330 L680.9 329 L681.9 328.1 L682.9 327.1 L683.9 326.2 L684.9 325.2 L685.9 324.2 L686.9 323.3 L687.9 322.3 L688.9 321.4 L690 320.4 L691 319.5 L692 318.5 L693.1 317.5 L694.1 316.6 L695.2 315.6 L696.2 314.7 L697.3 313.7 L698.4 312.7 L699.5 311.8 L700.5 310.8 L701.6 309.9 L702.7 308.9 L703.8 308 L704.9 307 L706 306 L707.1 305.1 L708.3 304.1 L709.4 303.2 L710.5 302.2 L711.6 301.3 L712.8 300.3 L713.9 299.4 L715.1 298.4 L716.2 297.5 L717.4 296.5 L718.5 295.6 L719.7 294.6 L720.9 293.7 L722.1 292.7 L723.2 291.8 L724.4 290.8 L725.6 289.9 L726.8 288.9 L728 288 L729.2 287 L730.4 286.1 L731.6 285.2 L732.8 284.2 L734.1 283.3 L735.3 282.4 L736.5 281.4 L737.7 280.5 L739 279.6 L740.2 278.6 L741.5 277.7 L742.7 276.8 L744 275.8 L745.2 274.9 L746.5 274 L747.7 273.1 L749 272.1 L750.3 271.2 L751.5 270.3 L752.8 269.4 L754.1 268.5 L755.4 267.6 L756.6 266.7 L757.9 265.7 L759.2 264.8 L760.5 263.9 L761.8 263 L763.1 262.1 L764.4 261.2 L765.7 260.3 L767 259.4 L768.3 258.5 L769.6 257.7 L771 256.8 L772.3 255.9 L773.6 255 L774.9 254.1 L776.2 253.2 L777.6 252.4 L778.9 251.5 L780.2 250.6 L781.5 249.7 L782.9 248.9 L784.2 248 L785.5 247.2 L786.9 246.3 L788.2 245.4 L789.6 244.6 L790.9 243.7 L792.3 242.9 L793.6 242 L795 241.2 L796.3 240.4 L797.7 239.5 L799 238.7 L800.4 237.9 L801.7 237 L803.1 236.2 L804.4 235.4 L805.8 234.6 L807.1 233.8 L808.5 233 L809.9 232.2 L811.2 231.4 L812.6 230.6 L813.9 229.8 L815.3 229 L816.7 228.2 L818 227.4 L819.4 226.7 L820.8 225.9 L822.1 225.1 L823.5 224.3 L824.9 223.6 L826.2 222.8 L827.6 222.1 L829 221.3 L830.3 220.6 L831.7 219.9 L833.1 219.1 L834.4 218.4 L835.8 217.7 L837.2 216.9 L838.5 216.2 L839.9 215.5 L841.3 214.8 L842.6 214.1 L844 213.4 L845.4 212.7 L846.7 212.1 L848.1 211.4 L849.5 210.7 L850.8 210 L852.2 209.4 L853.6 208.7 L854.9 208.1 L856.3 207.4 L857.6 206.8 L859 206.1 L860.4 205.5 L861.7 204.9 L863.1 204.3 L864.5 203.7 L865.8 203.1 L867.2 202.5 L868.5 201.9 L869.9 201.3 L871.2 200.7 L872.6 200.2 L874 199.6 L875.3 199 L876.7 198.5 L878 197.9 L879.4 197.4 L880.7 196.9 L882.1 196.4 L883.4 195.8 L884.8 195.3 L886.1 194.8 L887.5 194.3 L888.9 193.9 L890.2 193.4 L891.6 192.9 L892.9 192.4 L894.3 192 L895.6 191.5 L897 191.1 L898.3 190.7 L899.7 190.3 L901 189.8 L902.4 189.4 L903.7 189 L905.1 188.6 L906.4 188.3 L907.8 187.9 L909.1 187.5 L910.5 187.2 L911.8 186.8 L913.2 186.5 L914.5 186.2 L915.9 185.8 L917.2 185.5 L918.6 185.2 L919.9 184.9 L921.3 184.6 L922.6 184.4 L924 184.1 L925.3 183.8 L926.7 183.6 L928.1 183.4 L929.4 183.1 L930.8 182.9 L932.2 182.7 L933.5 182.5 L934.9 182.3 L936.2 182.1 L937.6 181.9 L939 181.8 L940.4 181.6 L941.7 181.5 L943.1 181.4 L944.5 181.2 L945.9 181.1 L947.3 181 L948.6 180.9 L950 180.8 L951.4 180.8 L952.8 180.7 L954.2 180.6 L955.6 180.6 L957 180.6 L958.4 180.5 L959.8 180.5 L961.2 180.5 L962.6 180.5 L964 180.5 L965.4 180.5 L966.9 180.6 L968.3 180.6 L969.7 180.7 L971.1 180.7 L972.6 180.8 L974 180.9 L975.5 181 L976.9 181.1 L978.3 181.2 L979.8 181.3 L981.2 181.5 L982.7 181.6 L984.2 181.7 L985.6 181.9 L987.1 182.1 L988.6 182.3 L990.1 182.4 L991.5 182.6 L993 182.9 L994.5 183.1 L996 183.3"/>
<path d="M1465.4 300.3 L1465.5 299 L1465.6 297.7 L1465.7 296.3 L1465.7 295 L1465.7 293.7 L1465.7 292.3 L1465.6 291 L1465.5 289.7 L1465.4 288.3 L1465.2 287 L1465 285.7 L1464.8 284.3 L1464.6 283 L1464.3 281.7 L1464 280.4 L1463.7 279 L1463.4 277.7 L1463 276.4 L1462.6 275 L1462.2 273.7 L1461.7 272.4 L1461.2 271.1 L1460.7 269.7 L1460.1 268.4 L1459.6 267.1 L1459 265.8 L1458.3 264.4 L1457.7 263.1 L1457 261.8 L1456.3 260.5 L1455.5 259.1 L1454.8 257.8 M350.6 256.5 L352.6 255.2 L354.6 253.9 L356.6 252.6 L358.7 251.2 L360.7 249.9 L362.9 248.6 L365 247.3 L367.2 246 L369.3 244.7 L371.6 243.3 L373.8 242 L376.1 240.7 L378.3 239.4 L380.7 238.1 L383 236.8 L385.4 235.5 L387.8 234.2 L390.2 232.9 L392.6 231.6 L395.1 230.3 L397.5 229 L400 227.7 L402.6 226.4 L405.1 225.1 L407.7 223.8 L410.3 222.5 L412.9 221.2 L415.5 219.9 L418.2 218.6 L420.9 217.3 L423.6 216 L426.3 214.7 L429 213.4 L431.8 212.1 L434.6 210.9 L437.4 209.6 L440.2 208.3 L443 207 L445.9 205.7 L448.8 204.5 L451.7 203.2 L454.6 201.9 L457.5 200.6 L460.5 199.4 L463.4 198.1 L466.4 196.8 L469.4 195.6 L472.4 194.3 L475.5 193 L478.5 191.8 L481.6 190.5 L484.7 189.3 L487.7 188 L490.9 186.8 L494 185.5 L497.1 184.3 L500.2 183.1 L503.4 181.8 L506.6 180.6 L509.8 179.4 L513 178.1 L516.2 176.9 L519.4 175.7 L522.6 174.5 L525.8 173.2 L529.1 172 L532.3 170.8 L535.6 169.6 L538.9 168.4 L542.1 167.2 L545.4 166 L548.7 164.8 L552 163.6 L555.3 162.4 L558.6 161.3 L561.9 160.1 L565.3 158.9 L568.6 157.7 L571.9 156.6 L575.2 155.4 L578.6 154.3 L581.9 153.1 L585.2 152 L588.6 150.8 L591.9 149.7 L595.2 148.6 L598.6 147.4 L601.9 146.3 L605.2 145.2 L608.6 144.1 L611.9 143 L615.2 141.9 L618.5 140.9 L621.8 139.8 L625.1 138.7 L628.4 137.6 L631.7 136.6 L635 135.5 L638.2 134.5 L641.5 133.5 L644.7 132.5 L648 131.4 L651.2 130.4 L654.4 129.4 L657.6 128.5 L660.8 127.5 L663.9 126.5 L667.1 125.6 L670.2 124.6 L673.3 123.7 L676.4 122.8 L679.5 121.9 L682.5 121 L685.5 120.1 L688.6 119.2 L691.5 118.4 L694.5 117.5 L697.4 116.7 L700.3 115.9 L703.2 115.1 L706.1 114.3 L708.9 113.5 L711.7 112.8 L714.4 112 L717.1 111.3 L719.8 110.6 L722.5 109.9 L725.1 109.3 L727.7 108.6 L730.3 108 L732.8 107.4 L735.3 106.8 L737.7 106.2 L740.1 105.7 L742.4 105.2 L744.8 104.7 L747 104.2 L749.3 103.7 L751.5 103.3 L753.6 102.9 L755.7 102.5 L757.8 102.1 L759.8 101.8 L761.7 101.5 L763.7 101.2 L765.5 100.9 L767.4 100.7 L769.2 100.5 L770.9 100.3 L772.6 100.2 L774.2 100 L775.9 99.9 L777.4 99.9 L778.9 99.8 L780.4 99.8 L781.8 99.8 L783.2 99.8 L784.6 99.9 L785.9 100 L787.1 100.1 L788.4 100.2 L789.6 100.4 L790.7 100.6 L791.8 100.8 L792.9 101.1 L793.9 101.3 L794.9 101.6 L795.9 102 L796.8 102.3 L797.7 102.7 L798.6 103.1 L799.4 103.5 L800.2 104 L801 104.4 L801.8 104.9 L802.5 105.4 L803.2 106 L803.9 106.5 L804.5 107.1 L805.2 107.7 L805.8 108.3 L806.4 108.9 L806.9 109.6 L807.5 110.3 L808 111 L808.5 111.7 L809 112.4 L809.5 113.1 L810 113.9 L810.5 114.7 L810.9 115.5 L811.3 116.3 L811.8 117.1 L812.2 117.9 L812.6 118.8 L812.9 119.7 L813.3 120.5 L813.7 121.4 L814 122.3 L814.4 123.2 L814.7 124.2 L815.1 125.1 L815.4 126 L815.7 127 L816 128 L816.4 129 L816.7 129.9 L817 130.9 L817.3 131.9 L817.6 133 L817.8 134 L818.1 135 L818.4 136.1 L818.7 137.1 L819 138.2 L819.3 139.2 L819.5 140.3 L819.8 141.4 L820.1 142.5 L820.3 143.6 L820.6 144.7 L820.9 145.8 L821.1 146.9 L821.4 148 L821.7 149.1 L821.9 150.3 L822.2 151.4 L822.5 152.5 L822.7 153.7 L823 154.8 L823.3 156 L823.5 157.2 L823.8 158.3 L824.1 159.5 L824.3 160.7 L824.6 161.8 L824.9 163 L825.2 164.2 L825.4 165.4 L825.7 166.6 L826 167.8 L826.3 169 L826.5 170.2 L826.8 171.4 L827.1 172.6 L827.4 173.8 L827.7 175.1 L828 176.3 L828.3 177.5 L828.6 178.7 L828.8 180 L829.1 181.2 L829.4 182.4 L829.7 183.7 L830.1 184.9 L830.4 186.2 L830.7 187.4 L831 188.7 L831.3 189.9 L831.6 191.2 L831.9 192.4 L832.3 193.7 L832.6 194.9 L832.9 196.2 L833.2 197.5 L833.6 198.7 L833.9 200"/>
</g>
<g fill="none" stroke="#7a7a7a" stroke-width="1.4">
<path d="M879.4 117.7 L882.1 118.4 L884.8 119.2 L887.4 120.1 L890.1 121 L892.7 122.1 L895.3 123.2 L898 124.3 L900.6 125.6 L903.2 126.9 L905.8 128.2 L908.5 129.6 L911.1 131.1 L913.7 132.7 L916.4 134.2 L919 135.9 L921.7 137.5 L924.3 139.3 L927 141 L929.6 142.9 L932.3 144.7"/>
<path d="M927.7 128.9 L928.4 129 L929.1 129 L929.8 129.1 L930.4 129.2 L931.1 129.3 L931.8 129.3 L932.5 129.4 L933.2 129.5 L933.9 129.6 L934.6 129.7 L935.3 129.8 L936 129.9 L936.7 130 L937.4 130.1 L938.1 130.3 L938.8 130.4 L939.5 130.5 L940.2 130.6 L940.9 130.8 L941.6 130.9"/>
<path d="M949 130.7 L949 131.1 L949 131.5 L949 131.9 L949 132.3 L949 132.6 L949 133 L949 133.4 L949 133.8 L949 134.2 L949 134.6 L949 135 L949 135.4 L949 135.8 L949 136.2 L949 136.5 L949 136.9 L949 137.3 L949 137.7 L949 138.1 L949 138.5"/>
<path d="M973.5 141 L972.3 142.2 L971.1 143.5 L970 144.7 L968.8 146 L967.7 147.3 L966.5 148.7 L965.4 150 L964.3 151.4 L963.2 152.8 L962 154.2 L960.9 155.6 L959.8 157.1 L958.7 158.6 L957.6 160 L956.5 161.6 L955.4 163.1 L954.3 164.6 L953.2 166.2 L952.1 167.7 L951 169.3"/>
<path d="M996 183.3 L998.5 183.7 L1001 184.1 L1003.6 184.6 L1006.1 185.1 L1008.7 185.6 L1011.3 186.1 L1013.9 186.7 L1016.4 187.2 L1019.1 187.8 L1021.7 188.5 L1024.3 189.1 L1027 189.8 L1029.6 190.5 L1032.3 191.2 L1035 192 L1037.6 192.7 L1040.3 193.5 L1043.1 194.3 L1045.8 195.1 L1048.5 196"/>
<path d="M833.9 200 L834.2 201 L834.4 202.1 L834.7 203.1 L835 204.1 L835.3 205.2 L835.6 206.2 L835.8 207.2 L836.1 208.3 L836.4 209.3 L836.7 210.3 L837 211.4 L837.3 212.4 L837.6 213.5 L837.9 214.5 L838.2 215.6 L838.5 216.6 L838.8 217.7 L839.1 218.7 L839.4 219.8 L839.7 220.8"/>
</g>
<circle cx="928" cy="114.1" r="1.3" fill="#ff5a36"/>
<circle cx="937.9" cy="111" r="1.3" fill="#ff5a36"/>
<circle cx="957" cy="151" r="1.3" fill="#ff5a36"/>
<g fill="none" stroke-width="2.1">
<path stroke="#4cc26c" d="M485.1 217.6 L483.3 218.8 L481.4 220.1 L479.5 221.3 L477.6 222.5 L475.6 223.7 L473.6 224.9 L471.6 226.1 L469.6 227.2 L467.6 228.3 L465.6 229.4 L463.6 230.4 L461.6 231.4 L459.6 232.4 L457.7 233.3 L455.7 234.2 L453.8 235 L451.9 235.8 L450 236.5 L448.1 237.2 L446.3 237.8 L444.5 238.4 L442.8 238.9 L441.1 239.3 L439.4 239.7 L437.8 240.1 L436.3 240.3 L434.8 240.5 L433.3 240.7 L432 240.8 L430.7 240.8 L429.4 240.8 L428.3 240.7 L427.2 240.5 L426.2 240.3 L425.3 240.1 L424.5 239.7 L423.7 239.3 L423.1 238.9 L422.6 238.4 L422.1 237.8 L421.8 237.2 L421.5 236.5 L421.4 235.8 L421.4 235 L421.5 234.2 L421.7 233.3 L422 232.4 L422.4 231.4 L423 230.4 L423.7 229.4 L424.4 228.3 L425.4 227.2 L426.4 226.1 L427.5 224.9 L428.8 223.7 L430.1 222.5 L431.6 221.3 L433.2 220.1 L434.8 218.8 L436.6 217.6 L438.5 216.3 L440.5 215 L442.5 213.8 L444.6 212.5 L446.8 211.3 L449.1 210 L451.4 208.8 L453.8 207.6 L456.2 206.4 L458.7 205.3 L461.2 204.2 L463.6 203.1 L466.2 202 L468.7 201 L471.1 200 L473.6 199.1 L476.1 198.2 L478.5 197.4 L480.8 196.6 L483.1 195.9 L485.4 195.2 L487.5 194.7 L489.6 194.1 L491.6 193.7 L493.5 193.3 L495.3 193 L497 192.7 L498.6 192.5 L500 192.4 L501.3 192.4 L502.5 192.4 L503.6 192.5 L504.6 192.7 L505.4 193 L506 193.3 L506.6 193.7 L506.9 194.1 L507.2 194.7 L507.3 195.2 L507.3 195.9 L507.2 196.6 L506.9 197.4 L506.5 198.2 L506 199.1 L505.4 200 L504.7 201 L503.8 202 L502.9 203.1 L501.8 204.2 L500.7 205.3 L499.4 206.4 L498.1 207.6 L496.7 208.8 L495.2 210 L493.7 211.3 L492.1 212.5 L490.4 213.8 L488.7 215 L486.9 216.3 L485.1 217.6Z"/>
<path stroke="#c0df25" d="M586.1 294.2 L585.8 295.5 L585.4 296.8 L584.9 298 L584.4 299.3 L583.9 300.5 L583.3 301.7 L582.7 302.9 L582 304.1 L581.3 305.2 L580.5 306.3 L579.7 307.4 L578.8 308.5 L577.9 309.5 L577 310.4 L576.1 311.3 L575.1 312.2 L574 313 L573 313.8 L571.9 314.5 L570.7 315.2 L569.6 315.8 L568.4 316.3 L567.2 316.8 L566 317.2 L564.8 317.6 L563.5 317.9 L562.3 318.1 L561 318.3 L559.7 318.4 L558.5 318.4 L557.2 318.4 L555.9 318.3 L554.7 318.1 L553.4 317.9 L552.2 317.6 L551 317.2 L549.8 316.8 L548.6 316.3 L547.5 315.8 L546.4 315.2 L545.4 314.5 L544.3 313.8 L543.4 313 L542.5 312.2 L541.6 311.3 L540.8 310.4 L540.1 309.5 L539.4 308.5 L538.8 307.4 L538.3 306.3 L537.8 305.2 L537.4 304.1 L537.1 302.9 L536.9 301.7 L536.8 300.5 L536.7 299.3 L536.8 298 L536.9 296.8 L537.1 295.5 L537.4 294.2 L537.7 293 L538.2 291.7 L538.7 290.4 L539.3 289.2 L540 287.9 L540.7 286.7 L541.6 285.5 L542.5 284.3 L543.4 283.1 L544.5 282 L545.6 280.9 L546.7 279.8 L547.9 278.8 L549.1 277.8 L550.4 276.9 L551.7 276 L553 275.2 L554.4 274.4 L555.8 273.6 L557.2 273 L558.6 272.3 L560 271.8 L561.4 271.3 L562.8 270.8 L564.2 270.5 L565.6 270.2 L567 269.9 L568.3 269.7 L569.7 269.6 L570.9 269.6 L572.2 269.6 L573.4 269.7 L574.6 269.9 L575.7 270.2 L576.8 270.5 L577.9 270.8 L578.9 271.3 L579.8 271.8 L580.7 272.3 L581.5 273 L582.3 273.6 L583 274.4 L583.7 275.2 L584.3 276 L584.8 276.9 L585.3 277.8 L585.8 278.8 L586.1 279.8 L586.4 280.9 L586.7 282 L586.9 283.1 L587 284.3 L587.1 285.5 L587.1 286.7 L587.1 287.9 L587 289.2 L586.9 290.4 L586.7 291.7 L586.4 293 L586.1 294.2Z"/>
</g>
<circle cx="461.3" cy="216.6" r="2.3" fill="#ff0000"/>
<text x="462.1" y="220.4" font-family="Liberation Sans, sans-serif" font-size="11" fill="#fff" text-anchor="middle" textLength="24.6" lengthAdjust="spacingAndGlyphs">COM</text>
<circle cx="560.5" cy="293.5" r="2.3" fill="#ff0000"/>
<text x="561.3" y="297.3" font-family="Liberation Sans, sans-serif" font-size="11" fill="#fff" text-anchor="middle" textLength="25.1" lengthAdjust="spacingAndGlyphs">MON</text>
<path d="M318 64.5 H636" stroke="#fff" stroke-width="1.2" stroke-dasharray="4.1 4.26" fill="none"/>
<g font-family="Liberation Mono, monospace" font-size="14.3" fill="#fff" xml:space="preserve">
<text x="316" y="30" textLength="50.2" lengthAdjust="spacing">BE000A</text>
<text x="316" y="43" textLength="317.7" lengthAdjust="spacing">Beg: 20251217 20:09:54 (sol = 265.78°)</text>
<text x="316" y="57" textLength="317.7" lengthAdjust="spacing">End: 20251217 23:54:34 (sol = 265.94°)</text>
<text x="316" y="81.7" textLength="50.2" lengthAdjust="spacing">...: 6</text>
<text x="316" y="95" textLength="50.2" lengthAdjust="spacing">COM: 2</text>
<text x="316" y="108" textLength="50.2" lengthAdjust="spacing">MON: 1</text>
</g>
<g font-family="Liberation Sans, sans-serif" font-size="30.6" fill="#585858">
<text transform="translate(148.8 696.9) rotate(-90) scale(0.8622 1)" x="0" y="0">APR</text>
<text transform="translate(294.7 701.8) rotate(-90) scale(0.8934 1)" x="0" y="0">MAY</text>
<text transform="translate(435.7 688.9) rotate(-90) scale(0.7882 1)" x="0" y="0">JUN</text>
<text transform="translate(576.7 683.9) rotate(-90) scale(0.7839 1)" x="0" y="0">JUL</text>
<text transform="translate(724.1 702.1) rotate(-90) scale(0.9069 1)" x="0" y="0">AUG</text>
<text transform="translate(871.7 694.7) rotate(-90) scale(0.8337 1)" x="0" y="0">SEP</text>
<text transform="translate(1016.7 700.8) rotate(-90) scale(0.8821 1)" x="0" y="0">OCT</text>
<text transform="translate(1170.1 704.2) rotate(-90) scale(0.8861 1)" x="0" y="0">NOV</text>
<text transform="translate(1319.1 701.1) rotate(-90) scale(0.8769 1)" x="0" y="0">DEC</text>
<text transform="translate(1469.1 687.4) rotate(-90) scale(0.7923 1)" x="0" y="0">JAN</text>
<text transform="translate(1628.1 696.5) rotate(-90) scale(0.8535 1)" x="0" y="0">FEB</text>
<text transform="translate(1766.1 705.8) rotate(-90) scale(0.8985 1)" x="0" y="0">MAR</text>
</g>
<rect x="106" y="831.9" width="24" height="4.3" fill="#bddf26"/>
<rect x="165" y="831.9" width="180" height="4.3" fill="#bddf26"/>
<rect x="366" y="831.9" width="259" height="4.3" fill="#bddf26"/>
<rect x="636" y="831.9" width="151" height="4.3" fill="#bddf26"/>
<rect x="807" y="831.9" width="93" height="4.3" fill="#bddf26"/>
<rect x="920" y="831.9" width="53" height="4.3" fill="#bddf26"/>
<rect x="984" y="831.9" width="82" height="4.3" fill="#bddf26"/>
<rect x="1082" y="831.9" width="122" height="4.3" fill="#bddf26"/>
<rect x="1244" y="831.9" width="82" height="4.3" fill="#bddf26"/>
<rect x="1337" y="831.9" width="19" height="4.3" fill="#bddf26"/>
<rect x="1381" y="831.9" width="63" height="4.3" fill="#bddf26"/>
<rect x="1459" y="831.9" width="53" height="4.3" fill="#bddf26"/>
<rect x="1523" y="831.9" width="24" height="4.3" fill="#bddf26"/>
<rect x="1724" y="831.9" width="24" height="4.3" fill="#bddf26"/>
<rect x="1758" y="831.9" width="24" height="4.3" fill="#bddf26"/>
<rect x="165" y="815.9" width="24" height="4.3" fill="#84d44b"/>
<rect x="224" y="815.9" width="63" height="4.3" fill="#84d44b"/>
<rect x="312" y="815.9" width="29" height="4.3" fill="#84d44b"/>
<rect x="366" y="815.9" width="127" height="4.3" fill="#84d44b"/>
<rect x="508" y="815.9" width="146" height="4.3" fill="#84d44b"/>
<rect x="704" y="815.9" width="34" height="4.3" fill="#84d44b"/>
<rect x="773" y="815.9" width="73" height="4.3" fill="#84d44b"/>
<rect x="871" y="815.9" width="117" height="4.3" fill="#84d44b"/>
<rect x="1003" y="815.9" width="14" height="4.3" fill="#84d44b"/>
<rect x="1062" y="815.9" width="151" height="4.3" fill="#84d44b"/>
<rect x="1244" y="815.9" width="23" height="4.3" fill="#84d44b"/>
<rect x="1293" y="815.9" width="23" height="4.3" fill="#84d44b"/>
<rect x="1342" y="815.9" width="23" height="4.3" fill="#84d44b"/>
<rect x="1386" y="815.9" width="43" height="4.3" fill="#84d44b"/>
<rect x="1459" y="815.9" width="24" height="4.3" fill="#84d44b"/>
<rect x="1548" y="815.9" width="23" height="4.3" fill="#84d44b"/>
<rect x="165" y="799.9" width="24" height="4.3" fill="#52c569"/>
<rect x="258" y="799.9" width="230" height="4.3" fill="#52c569"/>
<rect x="508" y="799.9" width="107" height="4.3" fill="#52c569"/>
<rect x="626" y="799.9" width="92" height="4.3" fill="#52c569"/>
<rect x="729" y="799.9" width="97" height="4.3" fill="#52c569"/>
<rect x="949" y="799.9" width="201" height="4.3" fill="#52c569"/>
<rect x="1160" y="799.9" width="88" height="4.3" fill="#52c569"/>
<rect x="1258" y="799.9" width="186" height="4.3" fill="#52c569"/>
<rect x="1459" y="799.9" width="24" height="4.3" fill="#52c569"/>
<rect x="1553" y="799.9" width="23" height="4.3" fill="#52c569"/>
<rect x="194" y="782.9" width="24" height="4.3" fill="#2cb17e"/>
<rect x="322" y="782.9" width="185" height="4.3" fill="#2cb17e"/>
<rect x="518" y="782.9" width="24" height="4.3" fill="#2cb17e"/>
<rect x="557" y="782.9" width="127" height="4.3" fill="#2cb17e"/>
<rect x="807" y="782.9" width="24" height="4.3" fill="#2cb17e"/>
<rect x="954" y="782.9" width="19" height="4.3" fill="#2cb17e"/>
<rect x="989" y="782.9" width="136" height="4.3" fill="#2cb17e"/>
<rect x="1155" y="782.9" width="63" height="4.3" fill="#2cb17e"/>
<rect x="1244" y="782.9" width="23" height="4.3" fill="#2cb17e"/>
<rect x="1317" y="782.9" width="24" height="4.3" fill="#2cb17e"/>
<rect x="1396" y="782.9" width="23" height="4.3" fill="#2cb17e"/>
<rect x="1464" y="782.9" width="186" height="4.3" fill="#2cb17e"/>
<rect x="341" y="766.9" width="29" height="4.3" fill="#1e9d89"/>
<rect x="410" y="766.9" width="38" height="4.3" fill="#1e9d89"/>
<rect x="469" y="766.9" width="24" height="4.3" fill="#1e9d89"/>
<rect x="528" y="766.9" width="18" height="4.3" fill="#1e9d89"/>
<rect x="562" y="766.9" width="29" height="4.3" fill="#1e9d89"/>
<rect x="616" y="766.9" width="33" height="4.3" fill="#1e9d89"/>
<rect x="959" y="766.9" width="29" height="4.3" fill="#1e9d89"/>
<rect x="1062" y="766.9" width="24" height="4.3" fill="#1e9d89"/>
<rect x="1101" y="766.9" width="24" height="4.3" fill="#1e9d89"/>
<rect x="1160" y="766.9" width="34" height="4.3" fill="#1e9d89"/>
<rect x="1249" y="766.9" width="23" height="4.3" fill="#1e9d89"/>
<rect x="1425" y="766.9" width="87" height="4.3" fill="#1e9d89"/>
<rect x="420" y="749.9" width="24" height="4.3" fill="#23888e"/>
<rect x="533" y="749.9" width="23" height="4.3" fill="#23888e"/>
<rect x="567" y="749.9" width="24" height="4.3" fill="#23888e"/>
<rect x="621" y="749.9" width="122" height="4.3" fill="#23888e"/>
<rect x="969" y="749.9" width="166" height="4.3" fill="#23888e"/>
<rect x="1185" y="749.9" width="161" height="4.3" fill="#23888e"/>
<rect x="1469" y="749.9" width="24" height="4.3" fill="#23888e"/>
<rect x="430" y="733.9" width="23" height="4.3" fill="#2c738e"/>
<rect x="577" y="733.9" width="156" height="4.3" fill="#2c738e"/>
<rect x="994" y="733.9" width="111" height="4.3" fill="#2c738e"/>
<rect x="1116" y="733.9" width="107" height="4.3" fill="#2c738e"/>
<rect x="1263" y="733.9" width="29" height="4.3" fill="#2c738e"/>
<rect x="1489" y="733.9" width="23" height="4.3" fill="#2c738e"/>
<rect x="592" y="717.9" width="23" height="4.3" fill="#355e8d"/>
<rect x="655" y="717.9" width="117" height="4.3" fill="#355e8d"/>
<rect x="1072" y="717.9" width="171" height="4.3" fill="#355e8d"/>
<rect x="1263" y="717.9" width="24" height="4.3" fill="#355e8d"/>
<rect x="596" y="700.9" width="137" height="4.3" fill="#404588"/>
<rect x="1092" y="700.9" width="28" height="4.3" fill="#404588"/>
<rect x="1200" y="700.9" width="23" height="4.3" fill="#404588"/>
<rect x="1273" y="700.9" width="53" height="4.3" fill="#404588"/>
<rect x="1111" y="684.9" width="24" height="4.3" fill="#472a7a"/>
<g stroke="#fff" stroke-opacity="0.45" stroke-width="2" stroke-dasharray="1.6 3.91">
<path d="M75 641.5 V842.5"/>
<path d="M219 641.5 V842.5"/>
<path d="M365 641.5 V842.5"/>
<path d="M506 641.5 V842.5"/>
<path d="M651 641.5 V842.5"/>
<path d="M797 641.5 V842.5"/>
<path d="M940 641.5 V842.5"/>
<path d="M1091 641.5 V842.5"/>
<path d="M1239 641.5 V842.5"/>
<path d="M1394 641.5 V842.5"/>
<path d="M1548 641.5 V842.5"/>
<path d="M1687 641.5 V842.5"/>
</g>
<path d="M1324 842.5 V641.5" stroke="#ff0000" stroke-width="2.1" stroke-dasharray="7.7 3.3" fill="none"/>
<g stroke="#fff" stroke-width="2.1" fill="none">
<path d="M114 834 h8 M118 830 v8"/>
<path d="M241 834 h8 M245 830 v8"/>
<path d="M511 834 h8 M515 830 v8"/>
<path d="M707 834 h8 M711 830 v8"/>
<path d="M834 834 h8 M838 830 v8"/>
<path d="M962 834 h8 M966 830 v8"/>
<path d="M987 834 h8 M991 830 v8"/>
<path d="M1117 834 h8 M1121 830 v8"/>
<path d="M1296 834 h8 M1300 830 v8"/>
<path d="M1342 834 h8 M1346 830 v8"/>
<path d="M1413 834 h8 M1417 830 v8"/>
<path d="M1482 834 h8 M1486 830 v8"/>
<path d="M1531 834 h8 M1535 830 v8"/>
<path d="M1732 834 h8 M1736 830 v8"/>
<path d="M1766 834 h8 M1770 830 v8"/>
<path d="M173 818 h8 M177 814 v8"/>
<path d="M256 818 h8 M260 814 v8"/>
<path d="M324 818 h8 M328 814 v8"/>
<path d="M438 818 h8 M442 814 v8"/>
<path d="M599 818 h8 M603 814 v8"/>
<path d="M717 818 h8 M721 814 v8"/>
<path d="M794 818 h8 M798 814 v8"/>
<path d="M940 818 h8 M944 814 v8"/>
<path d="M1006 818 h8 M1010 814 v8"/>
<path d="M1153 818 h8 M1157 814 v8"/>
<path d="M1251 818 h8 M1255 814 v8"/>
<path d="M1300 818 h8 M1304 814 v8"/>
<path d="M1350 818 h8 M1354 814 v8"/>
<path d="M1403 818 h8 M1407 814 v8"/>
<path d="M1467 818 h8 M1471 814 v8"/>
<path d="M1555 818 h8 M1559 814 v8"/>
<path d="M175 802 h8 M179 798 v8"/>
<path d="M379 802 h8 M383 798 v8"/>
<path d="M545 802 h8 M549 798 v8"/>
<path d="M683 802 h8 M687 798 v8"/>
<path d="M742 802 h8 M746 798 v8"/>
<path d="M1075 802 h8 M1079 798 v8"/>
<path d="M1217 802 h8 M1221 798 v8"/>
<path d="M1305 802 h8 M1309 798 v8"/>
<path d="M1467 802 h8 M1471 798 v8"/>
<path d="M1560 802 h8 M1564 798 v8"/>
<path d="M202 785 h8 M206 781 v8"/>
<path d="M401 785 h8 M405 781 v8"/>
<path d="M526 785 h8 M530 781 v8"/>
<path d="M639 785 h8 M643 781 v8"/>
<path d="M815 785 h8 M819 781 v8"/>
<path d="M960 785 h8 M964 781 v8"/>
<path d="M1041 785 h8 M1045 781 v8"/>
<path d="M1188 785 h8 M1192 781 v8"/>
<path d="M1251 785 h8 M1255 781 v8"/>
<path d="M1325 785 h8 M1329 781 v8"/>
<path d="M1403 785 h8 M1407 781 v8"/>
<path d="M1546 785 h8 M1550 781 v8"/>
<path d="M356 769 h8 M360 765 v8"/>
<path d="M427 769 h8 M431 765 v8"/>
<path d="M477 769 h8 M481 765 v8"/>
<path d="M536 769 h8 M540 765 v8"/>
<path d="M571 769 h8 M575 765 v8"/>
<path d="M631 769 h8 M635 765 v8"/>
<path d="M974 769 h8 M978 765 v8"/>
<path d="M1070 769 h8 M1074 765 v8"/>
<path d="M1109 769 h8 M1113 765 v8"/>
<path d="M1178 769 h8 M1182 765 v8"/>
<path d="M1256 769 h8 M1260 765 v8"/>
<path d="M1467 769 h8 M1471 765 v8"/>
<path d="M428 752 h8 M432 748 v8"/>
<path d="M540 752 h8 M544 748 v8"/>
<path d="M575 752 h8 M579 748 v8"/>
<path d="M704 752 h8 M708 748 v8"/>
<path d="M1095 752 h8 M1099 748 v8"/>
<path d="M1271 752 h8 M1275 748 v8"/>
<path d="M1477 752 h8 M1481 748 v8"/>
<path d="M438 736 h8 M442 732 v8"/>
<path d="M631 736 h8 M635 732 v8"/>
<path d="M1039 736 h8 M1043 732 v8"/>
<path d="M1168 736 h8 M1172 732 v8"/>
<path d="M1275 736 h8 M1279 732 v8"/>
<path d="M1497 736 h8 M1501 732 v8"/>
<path d="M599 720 h8 M603 716 v8"/>
<path d="M727 720 h8 M731 716 v8"/>
<path d="M1188 720 h8 M1192 716 v8"/>
<path d="M1271 720 h8 M1275 716 v8"/>
<path d="M688 703 h8 M692 699 v8"/>
<path d="M1102 703 h8 M1106 699 v8"/>
<path d="M1207 703 h8 M1211 699 v8"/>
<path d="M1300 703 h8 M1304 699 v8"/>
<path d="M1119 687 h8 M1123 683 v8"/>
</g>
<g font-family="Liberation Sans, sans-serif" font-size="11" fill="#fff" text-anchor="middle">
<text x="117.5" y="832.2" textLength="19.1" lengthAdjust="spacingAndGlyphs">KSE</text>
<text x="254.8" y="832.2" textLength="19.1" lengthAdjust="spacingAndGlyphs">ETA</text>
<text x="495.6" y="832.2" textLength="21.3" lengthAdjust="spacingAndGlyphs">NZC</text>
<text x="710.6" y="832.2" textLength="22" lengthAdjust="spacingAndGlyphs">NDA</text>
<text x="853.7" y="832.2" textLength="18.5" lengthAdjust="spacingAndGlyphs">SPE</text>
<text x="946.3" y="832.2" textLength="21.4" lengthAdjust="spacingAndGlyphs">ARD</text>
<text x="1025" y="832.2" textLength="20.3" lengthAdjust="spacingAndGlyphs">EGE</text>
<text x="1142.5" y="832.2" textLength="20.3" lengthAdjust="spacingAndGlyphs">NTA</text>
<text x="1284.8" y="832.2" textLength="24" lengthAdjust="spacingAndGlyphs">MON</text>
<text x="1343.5" y="832.2" textLength="20.5" lengthAdjust="spacingAndGlyphs">URS</text>
<text x="1412" y="832.2" textLength="20.4" lengthAdjust="spacingAndGlyphs">AHY</text>
<text x="1485.6" y="832.2" textLength="23.7" lengthAdjust="spacingAndGlyphs">GUM</text>
<text x="1535.3" y="832.2" textLength="21.5" lengthAdjust="spacingAndGlyphs">OHY</text>
<text x="1736" y="832.2" textLength="20.6" lengthAdjust="spacingAndGlyphs">XHE</text>
<text x="1769.6" y="832.2" textLength="15.9" lengthAdjust="spacingAndGlyphs">EVI</text>
<text x="176.5" y="815.8" textLength="20.5" lengthAdjust="spacingAndGlyphs">AVB</text>
<text x="255" y="815.8" textLength="17.8" lengthAdjust="spacingAndGlyphs">ELY</text>
<text x="324" y="815.8" textLength="22.4" lengthAdjust="spacingAndGlyphs">CAM</text>
<text x="432" y="815.8" textLength="20.4" lengthAdjust="spacingAndGlyphs">SSG</text>
<text x="578.7" y="815.8" textLength="19.7" lengthAdjust="spacingAndGlyphs">PCA</text>
<text x="720.6" y="815.8" textLength="21.8" lengthAdjust="spacingAndGlyphs">AUD</text>
<text x="809.4" y="815.8" textLength="21.1" lengthAdjust="spacingAndGlyphs">AUR</text>
<text x="931.2" y="815.8" textLength="20.8" lengthAdjust="spacingAndGlyphs">DSX</text>
<text x="1010.7" y="815.8" textLength="22.2" lengthAdjust="spacingAndGlyphs">OCU</text>
<text x="1138.1" y="815.8" textLength="21.1" lengthAdjust="spacingAndGlyphs">OER</text>
<text x="1254.8" y="815.8" textLength="21.9" lengthAdjust="spacingAndGlyphs">DKD</text>
<text x="1304.1" y="815.8" textLength="20.8" lengthAdjust="spacingAndGlyphs">DSV</text>
<text x="1353" y="815.8" textLength="18.4" lengthAdjust="spacingAndGlyphs">ALY</text>
<text x="1407.9" y="815.8" textLength="14.5" lengthAdjust="spacingAndGlyphs">ILE</text>
<text x="1471.6" y="815.8" textLength="20.2" lengthAdjust="spacingAndGlyphs">SCC</text>
<text x="1559.1" y="815.8" textLength="18.8" lengthAdjust="spacingAndGlyphs">FEV</text>
<text x="175.8" y="799.3" textLength="18.5" lengthAdjust="spacingAndGlyphs">LYR</text>
<text x="373" y="799.3" textLength="18.4" lengthAdjust="spacingAndGlyphs">JMC</text>
<text x="558.8" y="799.3" textLength="15" lengthAdjust="spacingAndGlyphs">JPE</text>
<text x="671.5" y="799.3" textLength="20.1" lengthAdjust="spacingAndGlyphs">PAU</text>
<text x="774.1" y="799.3" textLength="17.1" lengthAdjust="spacingAndGlyphs">NIA</text>
<text x="1049.9" y="799.3" textLength="19.2" lengthAdjust="spacingAndGlyphs">STA</text>
<text x="1206.4" y="799.3" textLength="23.2" lengthAdjust="spacingAndGlyphs">NOO</text>
<text x="1353.1" y="799.3" textLength="23.5" lengthAdjust="spacingAndGlyphs">COM</text>
<text x="1470.6" y="799.3" textLength="21.4" lengthAdjust="spacingAndGlyphs">NCC</text>
<text x="1564.4" y="799.3" textLength="19.7" lengthAdjust="spacingAndGlyphs">FED</text>
<text x="206" y="782.9" textLength="17.1" lengthAdjust="spacingAndGlyphs">HVI</text>
<text x="411.9" y="782.9" textLength="16.5" lengthAdjust="spacingAndGlyphs">ARI</text>
<text x="529.8" y="782.9" textLength="20.1" lengthAdjust="spacingAndGlyphs">SZC</text>
<text x="618.5" y="782.9" textLength="19.7" lengthAdjust="spacingAndGlyphs">CAP</text>
<text x="818.1" y="782.9" textLength="21.1" lengthAdjust="spacingAndGlyphs">NUE</text>
<text x="961.1" y="782.9" textLength="20.9" lengthAdjust="spacingAndGlyphs">OCT</text>
<text x="1059.4" y="782.9" textLength="17.6" lengthAdjust="spacingAndGlyphs">ORI</text>
<text x="1186.6" y="782.9" textLength="23.4" lengthAdjust="spacingAndGlyphs">AMO</text>
<text x="1255.1" y="782.9" textLength="20.6" lengthAdjust="spacingAndGlyphs">DPC</text>
<text x="1328.8" y="782.9" textLength="16.4" lengthAdjust="spacingAndGlyphs">XVI</text>
<text x="1407.6" y="782.9" textLength="22" lengthAdjust="spacingAndGlyphs">QUA</text>
<text x="1559.4" y="782.9" textLength="21.1" lengthAdjust="spacingAndGlyphs">AAN</text>
<text x="352.6" y="766.4" textLength="20.4" lengthAdjust="spacingAndGlyphs">TAH</text>
<text x="431.6" y="766.4" textLength="15.9" lengthAdjust="spacingAndGlyphs">JEA</text>
<text x="481.2" y="766.4" textLength="11.5" lengthAdjust="spacingAndGlyphs">JIP</text>
<text x="538.7" y="766.4" textLength="18.2" lengthAdjust="spacingAndGlyphs">PPS</text>
<text x="578.7" y="766.4" textLength="20.1" lengthAdjust="spacingAndGlyphs">ZCS</text>
<text x="633" y="766.4" textLength="22.4" lengthAdjust="spacingAndGlyphs">GDR</text>
<text x="971.1" y="766.4" textLength="21.4" lengthAdjust="spacingAndGlyphs">DRA</text>
<text x="1073.4" y="766.4" textLength="21.5" lengthAdjust="spacingAndGlyphs">LUM</text>
<text x="1112.9" y="766.4" textLength="20.2" lengthAdjust="spacingAndGlyphs">RPU</text>
<text x="1177.3" y="766.4" textLength="20.4" lengthAdjust="spacingAndGlyphs">THA</text>
<text x="1259.4" y="766.4" textLength="19.6" lengthAdjust="spacingAndGlyphs">PSU</text>
<text x="1470.7" y="766.4" textLength="20.6" lengthAdjust="spacingAndGlyphs">XCB</text>
<text x="431.3" y="750" textLength="16.7" lengthAdjust="spacingAndGlyphs">JRC</text>
<text x="544.4" y="750" textLength="21.3" lengthAdjust="spacingAndGlyphs">CAN</text>
<text x="578.1" y="750" textLength="20" lengthAdjust="spacingAndGlyphs">FAN</text>
<text x="681.1" y="750" textLength="19.2" lengthAdjust="spacingAndGlyphs">PER</text>
<text x="1050.2" y="750" textLength="19.8" lengthAdjust="spacingAndGlyphs">CTA</text>
<text x="1265.4" y="750" textLength="21.3" lengthAdjust="spacingAndGlyphs">HYD</text>
<text x="1481.2" y="750" textLength="22.8" lengthAdjust="spacingAndGlyphs">XUM</text>
<text x="441.5" y="733.6" textLength="21.8" lengthAdjust="spacingAndGlyphs">COR</text>
<text x="658.1" y="733.6" textLength="20.8" lengthAdjust="spacingAndGlyphs">SDA</text>
<text x="1049" y="733.6" textLength="16.9" lengthAdjust="spacingAndGlyphs">LMI</text>
<text x="1166.5" y="733.6" textLength="19.7" lengthAdjust="spacingAndGlyphs">LEO</text>
<text x="1274.8" y="733.6" textLength="19.8" lengthAdjust="spacingAndGlyphs">EHY</text>
<text x="1500.6" y="733.6" textLength="20" lengthAdjust="spacingAndGlyphs">ECV</text>
<text x="603.5" y="717.1" textLength="16.4" lengthAdjust="spacingAndGlyphs">JXA</text>
<text x="715.9" y="717.1" textLength="21.2" lengthAdjust="spacingAndGlyphs">KCG</text>
<text x="1156.5" y="717.1" textLength="22" lengthAdjust="spacingAndGlyphs">AND</text>
<text x="1274.8" y="717.1" textLength="22.2" lengthAdjust="spacingAndGlyphs">DAD</text>
<text x="666.6" y="700.7" textLength="16" lengthAdjust="spacingAndGlyphs">ERI</text>
<text x="1108.5" y="700.7" textLength="19.5" lengthAdjust="spacingAndGlyphs">SLD</text>
<text x="1211.2" y="700.7" textLength="21.1" lengthAdjust="spacingAndGlyphs">ORS</text>
<text x="1300" y="700.7" textLength="22.7" lengthAdjust="spacingAndGlyphs">GEM</text>
<text x="1122.9" y="684.2" textLength="22.5" lengthAdjust="spacingAndGlyphs">KUM</text>
</g>
<rect x="20.5" y="641.5" width="1765.0" height="201.0" fill="none" stroke="#fff" stroke-width="1.1"/>
<g stroke="#fff" stroke-width="1.1">
<path d="M20.5 842.5 v4.9"/>
<path d="M265.6 842.5 v4.9"/>
<path d="M510.8 842.5 v4.9"/>
<path d="M755.9 842.5 v4.9"/>
<path d="M1001.1 842.5 v4.9"/>
<path d="M1246.2 842.5 v4.9"/>
<path d="M1491.3 842.5 v4.9"/>
<path d="M1736.5 842.5 v4.9"/>
</g>
<g font-family="Liberation Sans, sans-serif" font-size="14.6" fill="#fff" text-anchor="middle">
<text x="20.5" y="862.3" textLength="7.4" lengthAdjust="spacingAndGlyphs">0</text>
<text x="265.6" y="862.3" textLength="16.3" lengthAdjust="spacingAndGlyphs">50</text>
<text x="510.8" y="862.3" textLength="25.1" lengthAdjust="spacingAndGlyphs">100</text>
<text x="755.9" y="862.3" textLength="25.1" lengthAdjust="spacingAndGlyphs">150</text>
<text x="1001.1" y="862.3" textLength="25.1" lengthAdjust="spacingAndGlyphs">200</text>
<text x="1246.2" y="862.3" textLength="25.1" lengthAdjust="spacingAndGlyphs">250</text>
<text x="1491.3" y="862.3" textLength="25.1" lengthAdjust="spacingAndGlyphs">300</text>
<text x="1736.5" y="862.3" textLength="25.1" lengthAdjust="spacingAndGlyphs">350</text>
<text x="902.6" y="882" textLength="146" lengthAdjust="spacingAndGlyphs">Solar longitude (deg)</text>
</g>
</g>
</svg>
</body></html>
